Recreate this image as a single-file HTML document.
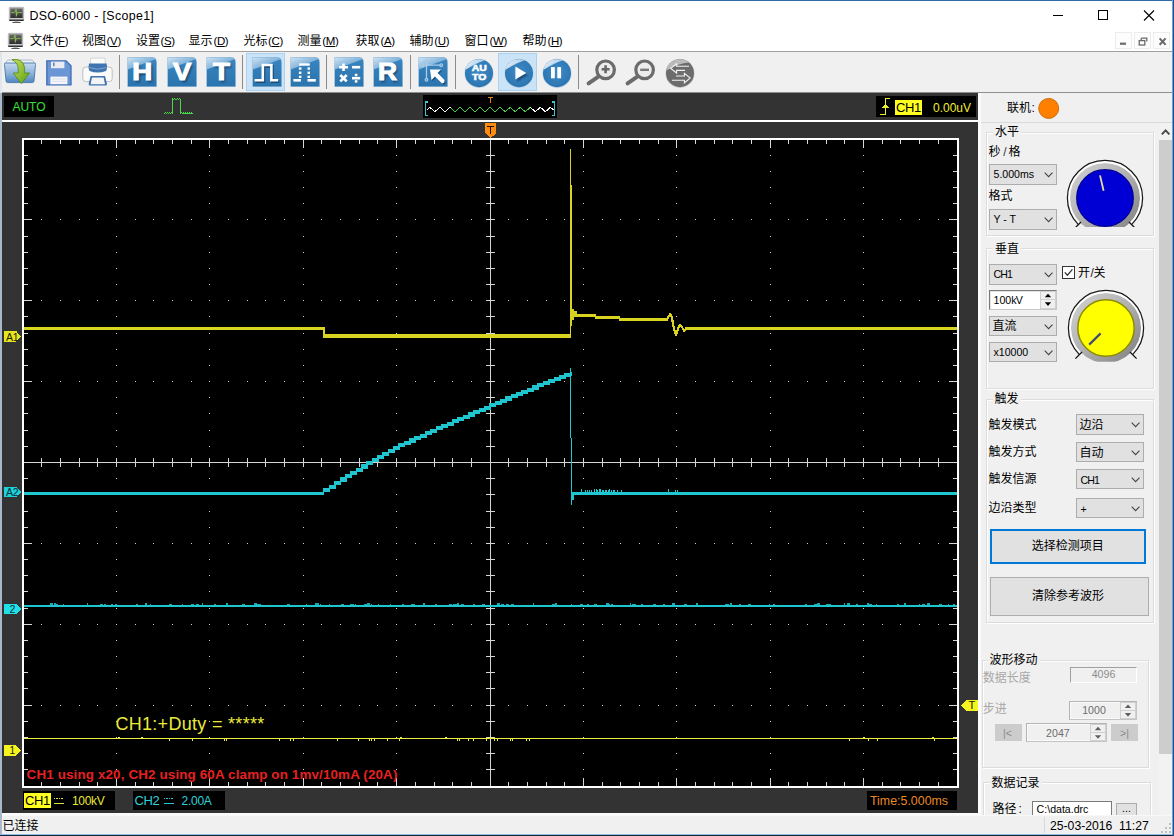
<!DOCTYPE html>
<html><head><meta charset="utf-8"><title>DSO-6000 - [Scope1]</title>
<style>
html,body{margin:0;padding:0}
body{width:1174px;height:836px;position:relative;overflow:hidden;background:#f0f0f0;font-family:"Liberation Sans",sans-serif;font-size:12px}
svg{overflow:visible}
.cj{position:absolute;font-size:12px;line-height:12px;color:#000;white-space:pre;font-family:"Liberation Sans","Noto Sans CJK SC",sans-serif}
</style></head><body>
<div style="position:absolute;left:0px;top:52px;width:1174px;height:40px;background:#f0f0f0"></div>
<div style="position:absolute;left:0px;top:92px;width:1174px;height:1px;background:#8e8e8e"></div>
<div style="position:absolute;left:119px;top:55px;width:1px;height:34px;background:#8a8a8a"></div>
<div style="position:absolute;left:242px;top:55px;width:1px;height:34px;background:#8a8a8a"></div>
<div style="position:absolute;left:326px;top:55px;width:1px;height:34px;background:#8a8a8a"></div>
<div style="position:absolute;left:410px;top:55px;width:1px;height:34px;background:#8a8a8a"></div>
<div style="position:absolute;left:455px;top:55px;width:1px;height:34px;background:#8a8a8a"></div>
<div style="position:absolute;left:578px;top:55px;width:1px;height:34px;background:#8a8a8a"></div>
<div style="position:absolute;left:246px;top:53px;width:39px;height:37.5px;box-sizing:border-box;background:#cbe3f6;border:1px solid #a9d1f2"></div>
<div style="position:absolute;left:498px;top:53px;width:39px;height:37.5px;box-sizing:border-box;background:#cbe3f6;border:1px solid #a9d1f2"></div>
<svg width="0" height="0" style="position:absolute"><defs>
<linearGradient id="bsq" x1="0" y1="0" x2="0" y2="1"><stop offset="0" stop-color="#3a86c0"/><stop offset="1" stop-color="#2b74ae"/></linearGradient>
<linearGradient id="bhl" x1="0" y1="0" x2="1" y2="1"><stop offset="0" stop-color="#dcebf7"/><stop offset="0.6" stop-color="#7fb2da"/><stop offset="1" stop-color="#4a8fc6"/></linearGradient>
<radialGradient id="bcir" cx="0.5" cy="0.45" r="0.6"><stop offset="0" stop-color="#3f8cc8"/><stop offset="0.8" stop-color="#2e78b4"/><stop offset="1" stop-color="#2a6aa2"/></radialGradient>
<linearGradient id="gcir" x1="0" y1="0" x2="1" y2="1"><stop offset="0" stop-color="#b5b5b5"/><stop offset="1" stop-color="#6f6f6f"/></linearGradient>
<linearGradient id="chl" x1="0" y1="0" x2="1" y2="0.6"><stop offset="0" stop-color="#f4f9fd"/><stop offset="1" stop-color="#9cc3e3"/></linearGradient>
<filter id="sh" x="-30%" y="-30%" width="160%" height="160%"><feGaussianBlur stdDeviation="1.1"/></filter>
<filter id="sh2" x="-30%" y="-30%" width="160%" height="160%"><feGaussianBlur stdDeviation="0.7"/></filter>
</defs></svg>
<svg style="position:absolute;left:126.5px;top:57px" width="30" height="30" viewBox="0 0 30 30" >
<path d="M0.2 0H25Q30 0 30 5V30H0.2Z" fill="#9fc4e2" opacity="0.6" filter="url(#sh2)"/>
<path d="M0.8 0.6H24.6Q29.4 0.6 29.4 5.4V29.4H0.8Z" fill="url(#bsq)"/>
<path d="M0.8 0.6H24.6Q27.4 0.6 28.6 2.2L0.8 12.6Z" fill="url(#bhl)" opacity="0.92"/>
<g transform="translate(15.3,23.2) scale(1.2,1)"><text x="0" y="0" text-anchor="middle" font-family="Liberation Sans" font-weight="bold" font-size="23" fill="#0c2f55" opacity="0.75" filter="url(#sh)" transform="translate(1.4,1.8)">H</text>
<text x="0" y="0" text-anchor="middle" font-family="Liberation Sans" font-weight="bold" font-size="23" fill="#fff" stroke="#fff" stroke-width="1">H</text></g></svg>
<svg style="position:absolute;left:166.5px;top:57px" width="30" height="30" viewBox="0 0 30 30" >
<path d="M0.2 0H25Q30 0 30 5V30H0.2Z" fill="#9fc4e2" opacity="0.6" filter="url(#sh2)"/>
<path d="M0.8 0.6H24.6Q29.4 0.6 29.4 5.4V29.4H0.8Z" fill="url(#bsq)"/>
<path d="M0.8 0.6H24.6Q27.4 0.6 28.6 2.2L0.8 12.6Z" fill="url(#bhl)" opacity="0.92"/>
<g transform="translate(15.3,23.2) scale(1.2,1)"><text x="0" y="0" text-anchor="middle" font-family="Liberation Sans" font-weight="bold" font-size="23" fill="#0c2f55" opacity="0.75" filter="url(#sh)" transform="translate(1.4,1.8)">V</text>
<text x="0" y="0" text-anchor="middle" font-family="Liberation Sans" font-weight="bold" font-size="23" fill="#fff" stroke="#fff" stroke-width="1">V</text></g></svg>
<svg style="position:absolute;left:205.5px;top:57px" width="30" height="30" viewBox="0 0 30 30" >
<path d="M0.2 0H25Q30 0 30 5V30H0.2Z" fill="#9fc4e2" opacity="0.6" filter="url(#sh2)"/>
<path d="M0.8 0.6H24.6Q29.4 0.6 29.4 5.4V29.4H0.8Z" fill="url(#bsq)"/>
<path d="M0.8 0.6H24.6Q27.4 0.6 28.6 2.2L0.8 12.6Z" fill="url(#bhl)" opacity="0.92"/>
<g transform="translate(15.3,23.2) scale(1.2,1)"><text x="0" y="0" text-anchor="middle" font-family="Liberation Sans" font-weight="bold" font-size="23" fill="#0c2f55" opacity="0.75" filter="url(#sh)" transform="translate(1.4,1.8)">T</text>
<text x="0" y="0" text-anchor="middle" font-family="Liberation Sans" font-weight="bold" font-size="23" fill="#fff" stroke="#fff" stroke-width="1">T</text></g></svg>
<svg style="position:absolute;left:251.5px;top:57px" width="30" height="30" viewBox="0 0 30 30" >
<path d="M0.2 0H25Q30 0 30 5V30H0.2Z" fill="#9fc4e2" opacity="0.6" filter="url(#sh2)"/>
<path d="M0.8 0.6H24.6Q29.4 0.6 29.4 5.4V29.4H0.8Z" fill="url(#bsq)"/>
<path d="M0.8 0.6H24.6Q27.4 0.6 28.6 2.2L0.8 12.6Z" fill="url(#bhl)" opacity="0.92"/>
<path d="M2.6 23.2H10.8V8H19.4V23.2H26.2" fill="none" stroke="#0c2f55" stroke-width="3" opacity="0.6" filter="url(#sh2)" transform="translate(1,1.4)"/>
<path d="M2.6 23.2H10.8V8H19.4V23.2H26.2" fill="none" stroke="#fff" stroke-width="2.6"/></svg>
<svg style="position:absolute;left:289.5px;top:57px" width="30" height="30" viewBox="0 0 30 30" >
<path d="M0.2 0H25Q30 0 30 5V30H0.2Z" fill="#9fc4e2" opacity="0.6" filter="url(#sh2)"/>
<path d="M0.8 0.6H24.6Q29.4 0.6 29.4 5.4V29.4H0.8Z" fill="url(#bsq)"/>
<path d="M0.8 0.6H24.6Q27.4 0.6 28.6 2.2L0.8 12.6Z" fill="url(#bhl)" opacity="0.92"/>
<g fill="#fff"><rect x="3.4" y="22" width="7.5" height="2.6"/><rect x="17.5" y="22" width="8.3" height="2.6"/><rect x="9.2" y="6.3" width="10.6" height="2.4"/>
<rect x="8.9" y="10.4" width="2.5" height="2.3"/><rect x="8.9" y="14.6" width="2.5" height="2.4"/><rect x="8.9" y="18.7" width="2.5" height="2.3"/>
<rect x="17.5" y="10.4" width="2.5" height="2.3"/><rect x="17.5" y="14.6" width="2.5" height="2.4"/><rect x="17.5" y="18.7" width="2.5" height="2.3"/></g></svg>
<svg style="position:absolute;left:334px;top:57px" width="30" height="30" viewBox="0 0 30 30" >
<path d="M0.2 0H25Q30 0 30 5V30H0.2Z" fill="#9fc4e2" opacity="0.6" filter="url(#sh2)"/>
<path d="M0.8 0.6H24.6Q29.4 0.6 29.4 5.4V29.4H0.8Z" fill="url(#bsq)"/>
<path d="M0.8 0.6H24.6Q27.4 0.6 28.6 2.2L0.8 12.6Z" fill="url(#bhl)" opacity="0.92"/>
<g stroke="#fff" stroke-width="2.6" fill="none"><path d="M5.1 10.2H14M9.5 6.4V14"/><path d="M18.1 10.2H26.2"/><path d="M6.3 18L12.7 24.4M12.7 18L6.3 24.4"/><path d="M18 21.2H26.2"/></g>
<g fill="#fff"><rect x="20.8" y="16.8" width="2.6" height="2.4"/><rect x="20.8" y="23.2" width="2.6" height="2.4"/></g></svg>
<svg style="position:absolute;left:373px;top:57px" width="30" height="30" viewBox="0 0 30 30" >
<path d="M0.2 0H25Q30 0 30 5V30H0.2Z" fill="#9fc4e2" opacity="0.6" filter="url(#sh2)"/>
<path d="M0.8 0.6H24.6Q29.4 0.6 29.4 5.4V29.4H0.8Z" fill="url(#bsq)"/>
<path d="M0.8 0.6H24.6Q27.4 0.6 28.6 2.2L0.8 12.6Z" fill="url(#bhl)" opacity="0.92"/>
<g transform="translate(14.600000000000001,23.2) scale(1.12,1)"><text x="0" y="0" text-anchor="middle" font-family="Liberation Sans" font-weight="bold" font-size="23.6" fill="#0c2f55" opacity="0.75" filter="url(#sh)" transform="translate(1.4,1.8)">R</text>
<text x="0" y="0" text-anchor="middle" font-family="Liberation Sans" font-weight="bold" font-size="23.6" fill="#fff" stroke="#fff" stroke-width="1">R</text></g></svg>
<svg style="position:absolute;left:418px;top:57px" width="30" height="30" viewBox="0 0 30 30" >
<path d="M0.2 0H25Q30 0 30 5V30H0.2Z" fill="#9fc4e2" opacity="0.6" filter="url(#sh2)"/>
<path d="M0.8 0.6H24.6Q29.4 0.6 29.4 5.4V29.4H0.8Z" fill="url(#bsq)"/>
<path d="M0.8 0.6H24.6Q27.4 0.6 28.6 2.2L0.8 12.6Z" fill="url(#bhl)" opacity="0.92"/>
<g stroke="#a9cbe6" stroke-width="1.3" fill="none"><path d="M8.5 5V21.6M5.6 8.2H22"/><circle cx="8.5" cy="3.8" r="1.3"/><circle cx="8.5" cy="22.8" r="1.3"/><circle cx="4.4" cy="8.2" r="1.3"/><circle cx="23.2" cy="8.2" r="1.3"/></g>
<path d="M12 12.5H23L19.6 16L26.5 23Q27 26 24 26.5L17 19.5L13.5 23Z" fill="#0c2f55" opacity="0.6" filter="url(#sh2)" transform="translate(1,1.2)"/>
<path d="M12 12.5H23L19.6 16L26.5 23Q27 26 24 26.5L17 19.5L13.5 23Z" fill="#fff"/></svg>
<svg style="position:absolute;left:463.7px;top:57.5px" width="30" height="30" viewBox="0 0 30 30" >
<circle cx="15" cy="15.4" r="14.6" fill="#a8c8e4" opacity="0.6" filter="url(#sh2)"/>
<circle cx="15" cy="15.2" r="14" fill="url(#bcir)"/>
<path d="M1.2 12A14 14 0 0 1 20.6 2.4Q12 5 1.2 12Z" fill="url(#chl)"/>
<g transform="translate(15.2,0) scale(1.13,1)" font-family="Liberation Sans" font-weight="bold" font-size="9.2" fill="#fff" stroke="#fff" stroke-width="0.55" text-anchor="middle"><text x="0" y="13.4">AU</text><text x="0" y="22.3">TO</text></g></svg>
<svg style="position:absolute;left:503.70000000000005px;top:57.5px" width="30" height="30" viewBox="0 0 30 30" >
<circle cx="15" cy="15.4" r="14.6" fill="#a8c8e4" opacity="0.6" filter="url(#sh2)"/>
<circle cx="15" cy="15.2" r="14" fill="url(#bcir)"/>
<path d="M1.2 12A14 14 0 0 1 20.6 2.4Q12 5 1.2 12Z" fill="url(#chl)"/>
<path d="M11.4 8.4L22.3 15L11.4 21.6Z" fill="#0c2f55" opacity="0.7" filter="url(#sh)" transform="translate(1.6,2)"/><path d="M11.4 8.4L22.3 15L11.4 21.6Z" fill="#fff"/></svg>
<svg style="position:absolute;left:541.9px;top:57.5px" width="30" height="30" viewBox="0 0 30 30" >
<circle cx="15" cy="15.4" r="14.6" fill="#a8c8e4" opacity="0.6" filter="url(#sh2)"/>
<circle cx="15" cy="15.2" r="14" fill="url(#bcir)"/>
<path d="M1.2 12A14 14 0 0 1 20.6 2.4Q12 5 1.2 12Z" fill="url(#chl)"/>
<rect x="9" y="9.1" width="3.8" height="11.2" fill="#fff"/><rect x="15.3" y="9.1" width="3.8" height="11.2" fill="#fff"/></svg>
<svg style="position:absolute;left:586px;top:59px" width="32" height="28" viewBox="0 0 32 28" ><circle cx="19.6" cy="10.8" r="8.8" fill="#ececec" stroke="#6b6b6b" stroke-width="3.2"/>
<path d="M12.4 17.6L2.6 24.4" stroke="#6b6b6b" stroke-width="4" stroke-linecap="round"/><path d="M15.6 10.3H23.6M19.6 6.3V14.3" stroke="#666" stroke-width="2.6"/></svg>
<svg style="position:absolute;left:625.2px;top:59px" width="32" height="28" viewBox="0 0 32 28" ><circle cx="19.6" cy="10.8" r="8.8" fill="#ececec" stroke="#6b6b6b" stroke-width="3.2"/>
<path d="M12.4 17.6L2.6 24.4" stroke="#6b6b6b" stroke-width="4" stroke-linecap="round"/><path d="M15.2 10.8H24" stroke="#7a7a7a" stroke-width="2.4"/></svg>
<svg style="position:absolute;left:664.7px;top:57.5px" width="30" height="30" viewBox="0 0 30 30" ><circle cx="15" cy="15.4" r="14.6" fill="#bdbdbd" opacity="0.5" filter="url(#sh2)"/>
<circle cx="15" cy="15.2" r="14" fill="#6c6c6c"/>
<path d="M1.3 12.5A14 14 0 0 1 24 4.4Q14 5 1.3 12.5Z" fill="#c9c9c9" opacity="0.85"/>
<g fill="none" stroke="#f2f2f2" stroke-width="1.1"><path d="M24 8.2H11.6V5.6L5.8 10.4L11.6 15V12.4H20"/><path d="M7 22.2H19.4V24.8L25.2 20L19.4 15.4V18H11"/></g></svg>
<svg style="position:absolute;left:3px;top:58px" width="34" height="28" viewBox="0 0 34 28" ><defs><linearGradient id="fg" x1="0" y1="0" x2="0" y2="1"><stop offset="0" stop-color="#c4d9ee"/><stop offset="0.5" stop-color="#8fb4dc"/><stop offset="1" stop-color="#4f86c0"/></linearGradient>
<linearGradient id="ag" x1="0" y1="0" x2="1" y2="1"><stop offset="0" stop-color="#c6e05a"/><stop offset="1" stop-color="#5f9e14"/></linearGradient></defs>
<path d="M3.5 3.5Q4 2 5.5 2H28.5Q30 2 30.5 3.5L31.5 6H2.5Z" fill="#e8eef5" stroke="#9aa8b8" stroke-width="0.7"/>
<path d="M1.5 6.5Q1 5 2.6 5H31.4Q33 5 32.5 6.5L31 23Q30.8 24.6 29.4 24.6H4.6Q3.2 24.6 3 23Z" fill="url(#fg)" stroke="#3d6da0" stroke-width="0.8"/>
<path d="M9 1.6Q20 0 21.6 9.6V15H26.6L18.4 25.6L10.2 15H15.2V10Q14.6 4.6 9 1.6Z" fill="url(#ag)" stroke="#4f8a10" stroke-width="0.8"/></svg>
<svg style="position:absolute;left:46px;top:60px" width="26" height="26" viewBox="0 0 26 26" ><path d="M0.8 0.8H20L25 5.8V24.8H0.8Z" fill="#6a96d6" stroke="#3f6eb4" stroke-width="1.3"/>
<rect x="5" y="1.6" width="13.4" height="6.6" fill="#e8ecf2"/><rect x="7" y="2.6" width="1.6" height="3.6" fill="#6a86b0"/>
<rect x="4.4" y="16.6" width="17" height="7.6" fill="#f4f6fa"/><path d="M6 19H20M6 21.4H20" stroke="#d5dbe6" stroke-width="0.8"/></svg>
<svg style="position:absolute;left:82px;top:57px" width="31" height="30" viewBox="0 0 31 30" ><rect x="8.6" y="1" width="14.6" height="9" rx="1" fill="#fafafa" stroke="#c9c9c9" stroke-width="0.8"/>
<rect x="0.8" y="10" width="29.4" height="14.6" rx="3" fill="#fbfbfb" stroke="#b8b8b8" stroke-width="0.9"/>
<path d="M7 6.6H24.6Q25.6 12 24 14Q15.5 17 7.6 14Q6 12 7 6.6Z" fill="#3f74b0"/>
<path d="M7.4 10.6Q15.5 13.6 24.2 10.6" stroke="#7fa5d0" stroke-width="1" fill="none"/>
<path d="M8.6 19H23L25 27Q25 28.6 23.6 28.6H8Q6.6 28.6 6.6 27Z" fill="#3f74b0"/>
<path d="M10 20.6H21.6L23 27.2H8.6Z" fill="#f4f4f4"/></svg>
<div style="position:absolute;left:2px;top:93px;width:976px;height:720px;background:#333"></div>
<svg style="position:absolute;left:0;top:0" width="1174" height="836" viewBox="0 0 1174 836" shape-rendering="crispEdges"><rect x="22" y="138" width="937" height="650" fill="#fff"/><rect x="24" y="140" width="933" height="646" fill="#000"/><g fill="#d0d0d0"><rect x="116" y="155" width="1" height="1"/><rect x="116" y="171" width="1" height="1"/><rect x="116" y="187" width="1" height="1"/><rect x="116" y="203" width="1" height="1"/><rect x="116" y="219" width="1" height="1"/><rect x="116" y="236" width="1" height="1"/><rect x="116" y="252" width="1" height="1"/><rect x="116" y="268" width="1" height="1"/><rect x="116" y="284" width="1" height="1"/><rect x="116" y="300" width="1" height="1"/><rect x="116" y="316" width="1" height="1"/><rect x="116" y="333" width="1" height="1"/><rect x="116" y="349" width="1" height="1"/><rect x="116" y="365" width="1" height="1"/><rect x="116" y="381" width="1" height="1"/><rect x="116" y="397" width="1" height="1"/><rect x="116" y="413" width="1" height="1"/><rect x="116" y="430" width="1" height="1"/><rect x="116" y="446" width="1" height="1"/><rect x="116" y="462" width="1" height="1"/><rect x="116" y="478" width="1" height="1"/><rect x="116" y="494" width="1" height="1"/><rect x="116" y="511" width="1" height="1"/><rect x="116" y="527" width="1" height="1"/><rect x="116" y="543" width="1" height="1"/><rect x="116" y="559" width="1" height="1"/><rect x="116" y="575" width="1" height="1"/><rect x="116" y="591" width="1" height="1"/><rect x="116" y="608" width="1" height="1"/><rect x="116" y="624" width="1" height="1"/><rect x="116" y="640" width="1" height="1"/><rect x="116" y="656" width="1" height="1"/><rect x="116" y="672" width="1" height="1"/><rect x="116" y="688" width="1" height="1"/><rect x="116" y="705" width="1" height="1"/><rect x="116" y="721" width="1" height="1"/><rect x="116" y="737" width="1" height="1"/><rect x="116" y="753" width="1" height="1"/><rect x="116" y="769" width="1" height="1"/><rect x="209" y="155" width="1" height="1"/><rect x="209" y="171" width="1" height="1"/><rect x="209" y="187" width="1" height="1"/><rect x="209" y="203" width="1" height="1"/><rect x="209" y="219" width="1" height="1"/><rect x="209" y="236" width="1" height="1"/><rect x="209" y="252" width="1" height="1"/><rect x="209" y="268" width="1" height="1"/><rect x="209" y="284" width="1" height="1"/><rect x="209" y="300" width="1" height="1"/><rect x="209" y="316" width="1" height="1"/><rect x="209" y="333" width="1" height="1"/><rect x="209" y="349" width="1" height="1"/><rect x="209" y="365" width="1" height="1"/><rect x="209" y="381" width="1" height="1"/><rect x="209" y="397" width="1" height="1"/><rect x="209" y="413" width="1" height="1"/><rect x="209" y="430" width="1" height="1"/><rect x="209" y="446" width="1" height="1"/><rect x="209" y="462" width="1" height="1"/><rect x="209" y="478" width="1" height="1"/><rect x="209" y="494" width="1" height="1"/><rect x="209" y="511" width="1" height="1"/><rect x="209" y="527" width="1" height="1"/><rect x="209" y="543" width="1" height="1"/><rect x="209" y="559" width="1" height="1"/><rect x="209" y="575" width="1" height="1"/><rect x="209" y="591" width="1" height="1"/><rect x="209" y="608" width="1" height="1"/><rect x="209" y="624" width="1" height="1"/><rect x="209" y="640" width="1" height="1"/><rect x="209" y="656" width="1" height="1"/><rect x="209" y="672" width="1" height="1"/><rect x="209" y="688" width="1" height="1"/><rect x="209" y="705" width="1" height="1"/><rect x="209" y="721" width="1" height="1"/><rect x="209" y="737" width="1" height="1"/><rect x="209" y="753" width="1" height="1"/><rect x="209" y="769" width="1" height="1"/><rect x="303" y="155" width="1" height="1"/><rect x="303" y="171" width="1" height="1"/><rect x="303" y="187" width="1" height="1"/><rect x="303" y="203" width="1" height="1"/><rect x="303" y="219" width="1" height="1"/><rect x="303" y="236" width="1" height="1"/><rect x="303" y="252" width="1" height="1"/><rect x="303" y="268" width="1" height="1"/><rect x="303" y="284" width="1" height="1"/><rect x="303" y="300" width="1" height="1"/><rect x="303" y="316" width="1" height="1"/><rect x="303" y="333" width="1" height="1"/><rect x="303" y="349" width="1" height="1"/><rect x="303" y="365" width="1" height="1"/><rect x="303" y="381" width="1" height="1"/><rect x="303" y="397" width="1" height="1"/><rect x="303" y="413" width="1" height="1"/><rect x="303" y="430" width="1" height="1"/><rect x="303" y="446" width="1" height="1"/><rect x="303" y="462" width="1" height="1"/><rect x="303" y="478" width="1" height="1"/><rect x="303" y="494" width="1" height="1"/><rect x="303" y="511" width="1" height="1"/><rect x="303" y="527" width="1" height="1"/><rect x="303" y="543" width="1" height="1"/><rect x="303" y="559" width="1" height="1"/><rect x="303" y="575" width="1" height="1"/><rect x="303" y="591" width="1" height="1"/><rect x="303" y="608" width="1" height="1"/><rect x="303" y="624" width="1" height="1"/><rect x="303" y="640" width="1" height="1"/><rect x="303" y="656" width="1" height="1"/><rect x="303" y="672" width="1" height="1"/><rect x="303" y="688" width="1" height="1"/><rect x="303" y="705" width="1" height="1"/><rect x="303" y="721" width="1" height="1"/><rect x="303" y="737" width="1" height="1"/><rect x="303" y="753" width="1" height="1"/><rect x="303" y="769" width="1" height="1"/><rect x="396" y="155" width="1" height="1"/><rect x="396" y="171" width="1" height="1"/><rect x="396" y="187" width="1" height="1"/><rect x="396" y="203" width="1" height="1"/><rect x="396" y="219" width="1" height="1"/><rect x="396" y="236" width="1" height="1"/><rect x="396" y="252" width="1" height="1"/><rect x="396" y="268" width="1" height="1"/><rect x="396" y="284" width="1" height="1"/><rect x="396" y="300" width="1" height="1"/><rect x="396" y="316" width="1" height="1"/><rect x="396" y="333" width="1" height="1"/><rect x="396" y="349" width="1" height="1"/><rect x="396" y="365" width="1" height="1"/><rect x="396" y="381" width="1" height="1"/><rect x="396" y="397" width="1" height="1"/><rect x="396" y="413" width="1" height="1"/><rect x="396" y="430" width="1" height="1"/><rect x="396" y="446" width="1" height="1"/><rect x="396" y="462" width="1" height="1"/><rect x="396" y="478" width="1" height="1"/><rect x="396" y="494" width="1" height="1"/><rect x="396" y="511" width="1" height="1"/><rect x="396" y="527" width="1" height="1"/><rect x="396" y="543" width="1" height="1"/><rect x="396" y="559" width="1" height="1"/><rect x="396" y="575" width="1" height="1"/><rect x="396" y="591" width="1" height="1"/><rect x="396" y="608" width="1" height="1"/><rect x="396" y="624" width="1" height="1"/><rect x="396" y="640" width="1" height="1"/><rect x="396" y="656" width="1" height="1"/><rect x="396" y="672" width="1" height="1"/><rect x="396" y="688" width="1" height="1"/><rect x="396" y="705" width="1" height="1"/><rect x="396" y="721" width="1" height="1"/><rect x="396" y="737" width="1" height="1"/><rect x="396" y="753" width="1" height="1"/><rect x="396" y="769" width="1" height="1"/><rect x="583" y="155" width="1" height="1"/><rect x="583" y="171" width="1" height="1"/><rect x="583" y="187" width="1" height="1"/><rect x="583" y="203" width="1" height="1"/><rect x="583" y="219" width="1" height="1"/><rect x="583" y="236" width="1" height="1"/><rect x="583" y="252" width="1" height="1"/><rect x="583" y="268" width="1" height="1"/><rect x="583" y="284" width="1" height="1"/><rect x="583" y="300" width="1" height="1"/><rect x="583" y="316" width="1" height="1"/><rect x="583" y="333" width="1" height="1"/><rect x="583" y="349" width="1" height="1"/><rect x="583" y="365" width="1" height="1"/><rect x="583" y="381" width="1" height="1"/><rect x="583" y="397" width="1" height="1"/><rect x="583" y="413" width="1" height="1"/><rect x="583" y="430" width="1" height="1"/><rect x="583" y="446" width="1" height="1"/><rect x="583" y="462" width="1" height="1"/><rect x="583" y="478" width="1" height="1"/><rect x="583" y="494" width="1" height="1"/><rect x="583" y="511" width="1" height="1"/><rect x="583" y="527" width="1" height="1"/><rect x="583" y="543" width="1" height="1"/><rect x="583" y="559" width="1" height="1"/><rect x="583" y="575" width="1" height="1"/><rect x="583" y="591" width="1" height="1"/><rect x="583" y="608" width="1" height="1"/><rect x="583" y="624" width="1" height="1"/><rect x="583" y="640" width="1" height="1"/><rect x="583" y="656" width="1" height="1"/><rect x="583" y="672" width="1" height="1"/><rect x="583" y="688" width="1" height="1"/><rect x="583" y="705" width="1" height="1"/><rect x="583" y="721" width="1" height="1"/><rect x="583" y="737" width="1" height="1"/><rect x="583" y="753" width="1" height="1"/><rect x="583" y="769" width="1" height="1"/><rect x="676" y="155" width="1" height="1"/><rect x="676" y="171" width="1" height="1"/><rect x="676" y="187" width="1" height="1"/><rect x="676" y="203" width="1" height="1"/><rect x="676" y="219" width="1" height="1"/><rect x="676" y="236" width="1" height="1"/><rect x="676" y="252" width="1" height="1"/><rect x="676" y="268" width="1" height="1"/><rect x="676" y="284" width="1" height="1"/><rect x="676" y="300" width="1" height="1"/><rect x="676" y="316" width="1" height="1"/><rect x="676" y="333" width="1" height="1"/><rect x="676" y="349" width="1" height="1"/><rect x="676" y="365" width="1" height="1"/><rect x="676" y="381" width="1" height="1"/><rect x="676" y="397" width="1" height="1"/><rect x="676" y="413" width="1" height="1"/><rect x="676" y="430" width="1" height="1"/><rect x="676" y="446" width="1" height="1"/><rect x="676" y="462" width="1" height="1"/><rect x="676" y="478" width="1" height="1"/><rect x="676" y="494" width="1" height="1"/><rect x="676" y="511" width="1" height="1"/><rect x="676" y="527" width="1" height="1"/><rect x="676" y="543" width="1" height="1"/><rect x="676" y="559" width="1" height="1"/><rect x="676" y="575" width="1" height="1"/><rect x="676" y="591" width="1" height="1"/><rect x="676" y="608" width="1" height="1"/><rect x="676" y="624" width="1" height="1"/><rect x="676" y="640" width="1" height="1"/><rect x="676" y="656" width="1" height="1"/><rect x="676" y="672" width="1" height="1"/><rect x="676" y="688" width="1" height="1"/><rect x="676" y="705" width="1" height="1"/><rect x="676" y="721" width="1" height="1"/><rect x="676" y="737" width="1" height="1"/><rect x="676" y="753" width="1" height="1"/><rect x="676" y="769" width="1" height="1"/><rect x="770" y="155" width="1" height="1"/><rect x="770" y="171" width="1" height="1"/><rect x="770" y="187" width="1" height="1"/><rect x="770" y="203" width="1" height="1"/><rect x="770" y="219" width="1" height="1"/><rect x="770" y="236" width="1" height="1"/><rect x="770" y="252" width="1" height="1"/><rect x="770" y="268" width="1" height="1"/><rect x="770" y="284" width="1" height="1"/><rect x="770" y="300" width="1" height="1"/><rect x="770" y="316" width="1" height="1"/><rect x="770" y="333" width="1" height="1"/><rect x="770" y="349" width="1" height="1"/><rect x="770" y="365" width="1" height="1"/><rect x="770" y="381" width="1" height="1"/><rect x="770" y="397" width="1" height="1"/><rect x="770" y="413" width="1" height="1"/><rect x="770" y="430" width="1" height="1"/><rect x="770" y="446" width="1" height="1"/><rect x="770" y="462" width="1" height="1"/><rect x="770" y="478" width="1" height="1"/><rect x="770" y="494" width="1" height="1"/><rect x="770" y="511" width="1" height="1"/><rect x="770" y="527" width="1" height="1"/><rect x="770" y="543" width="1" height="1"/><rect x="770" y="559" width="1" height="1"/><rect x="770" y="575" width="1" height="1"/><rect x="770" y="591" width="1" height="1"/><rect x="770" y="608" width="1" height="1"/><rect x="770" y="624" width="1" height="1"/><rect x="770" y="640" width="1" height="1"/><rect x="770" y="656" width="1" height="1"/><rect x="770" y="672" width="1" height="1"/><rect x="770" y="688" width="1" height="1"/><rect x="770" y="705" width="1" height="1"/><rect x="770" y="721" width="1" height="1"/><rect x="770" y="737" width="1" height="1"/><rect x="770" y="753" width="1" height="1"/><rect x="770" y="769" width="1" height="1"/><rect x="863" y="155" width="1" height="1"/><rect x="863" y="171" width="1" height="1"/><rect x="863" y="187" width="1" height="1"/><rect x="863" y="203" width="1" height="1"/><rect x="863" y="219" width="1" height="1"/><rect x="863" y="236" width="1" height="1"/><rect x="863" y="252" width="1" height="1"/><rect x="863" y="268" width="1" height="1"/><rect x="863" y="284" width="1" height="1"/><rect x="863" y="300" width="1" height="1"/><rect x="863" y="316" width="1" height="1"/><rect x="863" y="333" width="1" height="1"/><rect x="863" y="349" width="1" height="1"/><rect x="863" y="365" width="1" height="1"/><rect x="863" y="381" width="1" height="1"/><rect x="863" y="397" width="1" height="1"/><rect x="863" y="413" width="1" height="1"/><rect x="863" y="430" width="1" height="1"/><rect x="863" y="446" width="1" height="1"/><rect x="863" y="462" width="1" height="1"/><rect x="863" y="478" width="1" height="1"/><rect x="863" y="494" width="1" height="1"/><rect x="863" y="511" width="1" height="1"/><rect x="863" y="527" width="1" height="1"/><rect x="863" y="543" width="1" height="1"/><rect x="863" y="559" width="1" height="1"/><rect x="863" y="575" width="1" height="1"/><rect x="863" y="591" width="1" height="1"/><rect x="863" y="608" width="1" height="1"/><rect x="863" y="624" width="1" height="1"/><rect x="863" y="640" width="1" height="1"/><rect x="863" y="656" width="1" height="1"/><rect x="863" y="672" width="1" height="1"/><rect x="863" y="688" width="1" height="1"/><rect x="863" y="705" width="1" height="1"/><rect x="863" y="721" width="1" height="1"/><rect x="863" y="737" width="1" height="1"/><rect x="863" y="753" width="1" height="1"/><rect x="863" y="769" width="1" height="1"/><rect x="41" y="219" width="1" height="1"/><rect x="60" y="219" width="1" height="1"/><rect x="79" y="219" width="1" height="1"/><rect x="97" y="219" width="1" height="1"/><rect x="135" y="219" width="1" height="1"/><rect x="153" y="219" width="1" height="1"/><rect x="172" y="219" width="1" height="1"/><rect x="191" y="219" width="1" height="1"/><rect x="228" y="219" width="1" height="1"/><rect x="247" y="219" width="1" height="1"/><rect x="265" y="219" width="1" height="1"/><rect x="284" y="219" width="1" height="1"/><rect x="321" y="219" width="1" height="1"/><rect x="340" y="219" width="1" height="1"/><rect x="359" y="219" width="1" height="1"/><rect x="377" y="219" width="1" height="1"/><rect x="415" y="219" width="1" height="1"/><rect x="434" y="219" width="1" height="1"/><rect x="452" y="219" width="1" height="1"/><rect x="471" y="219" width="1" height="1"/><rect x="508" y="219" width="1" height="1"/><rect x="527" y="219" width="1" height="1"/><rect x="546" y="219" width="1" height="1"/><rect x="564" y="219" width="1" height="1"/><rect x="602" y="219" width="1" height="1"/><rect x="620" y="219" width="1" height="1"/><rect x="639" y="219" width="1" height="1"/><rect x="658" y="219" width="1" height="1"/><rect x="695" y="219" width="1" height="1"/><rect x="714" y="219" width="1" height="1"/><rect x="732" y="219" width="1" height="1"/><rect x="751" y="219" width="1" height="1"/><rect x="788" y="219" width="1" height="1"/><rect x="807" y="219" width="1" height="1"/><rect x="826" y="219" width="1" height="1"/><rect x="844" y="219" width="1" height="1"/><rect x="882" y="219" width="1" height="1"/><rect x="900" y="219" width="1" height="1"/><rect x="919" y="219" width="1" height="1"/><rect x="938" y="219" width="1" height="1"/><rect x="41" y="300" width="1" height="1"/><rect x="60" y="300" width="1" height="1"/><rect x="79" y="300" width="1" height="1"/><rect x="97" y="300" width="1" height="1"/><rect x="135" y="300" width="1" height="1"/><rect x="153" y="300" width="1" height="1"/><rect x="172" y="300" width="1" height="1"/><rect x="191" y="300" width="1" height="1"/><rect x="228" y="300" width="1" height="1"/><rect x="247" y="300" width="1" height="1"/><rect x="265" y="300" width="1" height="1"/><rect x="284" y="300" width="1" height="1"/><rect x="321" y="300" width="1" height="1"/><rect x="340" y="300" width="1" height="1"/><rect x="359" y="300" width="1" height="1"/><rect x="377" y="300" width="1" height="1"/><rect x="415" y="300" width="1" height="1"/><rect x="434" y="300" width="1" height="1"/><rect x="452" y="300" width="1" height="1"/><rect x="471" y="300" width="1" height="1"/><rect x="508" y="300" width="1" height="1"/><rect x="527" y="300" width="1" height="1"/><rect x="546" y="300" width="1" height="1"/><rect x="564" y="300" width="1" height="1"/><rect x="602" y="300" width="1" height="1"/><rect x="620" y="300" width="1" height="1"/><rect x="639" y="300" width="1" height="1"/><rect x="658" y="300" width="1" height="1"/><rect x="695" y="300" width="1" height="1"/><rect x="714" y="300" width="1" height="1"/><rect x="732" y="300" width="1" height="1"/><rect x="751" y="300" width="1" height="1"/><rect x="788" y="300" width="1" height="1"/><rect x="807" y="300" width="1" height="1"/><rect x="826" y="300" width="1" height="1"/><rect x="844" y="300" width="1" height="1"/><rect x="882" y="300" width="1" height="1"/><rect x="900" y="300" width="1" height="1"/><rect x="919" y="300" width="1" height="1"/><rect x="938" y="300" width="1" height="1"/><rect x="41" y="381" width="1" height="1"/><rect x="60" y="381" width="1" height="1"/><rect x="79" y="381" width="1" height="1"/><rect x="97" y="381" width="1" height="1"/><rect x="135" y="381" width="1" height="1"/><rect x="153" y="381" width="1" height="1"/><rect x="172" y="381" width="1" height="1"/><rect x="191" y="381" width="1" height="1"/><rect x="228" y="381" width="1" height="1"/><rect x="247" y="381" width="1" height="1"/><rect x="265" y="381" width="1" height="1"/><rect x="284" y="381" width="1" height="1"/><rect x="321" y="381" width="1" height="1"/><rect x="340" y="381" width="1" height="1"/><rect x="359" y="381" width="1" height="1"/><rect x="377" y="381" width="1" height="1"/><rect x="415" y="381" width="1" height="1"/><rect x="434" y="381" width="1" height="1"/><rect x="452" y="381" width="1" height="1"/><rect x="471" y="381" width="1" height="1"/><rect x="508" y="381" width="1" height="1"/><rect x="527" y="381" width="1" height="1"/><rect x="546" y="381" width="1" height="1"/><rect x="564" y="381" width="1" height="1"/><rect x="602" y="381" width="1" height="1"/><rect x="620" y="381" width="1" height="1"/><rect x="639" y="381" width="1" height="1"/><rect x="658" y="381" width="1" height="1"/><rect x="695" y="381" width="1" height="1"/><rect x="714" y="381" width="1" height="1"/><rect x="732" y="381" width="1" height="1"/><rect x="751" y="381" width="1" height="1"/><rect x="788" y="381" width="1" height="1"/><rect x="807" y="381" width="1" height="1"/><rect x="826" y="381" width="1" height="1"/><rect x="844" y="381" width="1" height="1"/><rect x="882" y="381" width="1" height="1"/><rect x="900" y="381" width="1" height="1"/><rect x="919" y="381" width="1" height="1"/><rect x="938" y="381" width="1" height="1"/><rect x="41" y="543" width="1" height="1"/><rect x="60" y="543" width="1" height="1"/><rect x="79" y="543" width="1" height="1"/><rect x="97" y="543" width="1" height="1"/><rect x="135" y="543" width="1" height="1"/><rect x="153" y="543" width="1" height="1"/><rect x="172" y="543" width="1" height="1"/><rect x="191" y="543" width="1" height="1"/><rect x="228" y="543" width="1" height="1"/><rect x="247" y="543" width="1" height="1"/><rect x="265" y="543" width="1" height="1"/><rect x="284" y="543" width="1" height="1"/><rect x="321" y="543" width="1" height="1"/><rect x="340" y="543" width="1" height="1"/><rect x="359" y="543" width="1" height="1"/><rect x="377" y="543" width="1" height="1"/><rect x="415" y="543" width="1" height="1"/><rect x="434" y="543" width="1" height="1"/><rect x="452" y="543" width="1" height="1"/><rect x="471" y="543" width="1" height="1"/><rect x="508" y="543" width="1" height="1"/><rect x="527" y="543" width="1" height="1"/><rect x="546" y="543" width="1" height="1"/><rect x="564" y="543" width="1" height="1"/><rect x="602" y="543" width="1" height="1"/><rect x="620" y="543" width="1" height="1"/><rect x="639" y="543" width="1" height="1"/><rect x="658" y="543" width="1" height="1"/><rect x="695" y="543" width="1" height="1"/><rect x="714" y="543" width="1" height="1"/><rect x="732" y="543" width="1" height="1"/><rect x="751" y="543" width="1" height="1"/><rect x="788" y="543" width="1" height="1"/><rect x="807" y="543" width="1" height="1"/><rect x="826" y="543" width="1" height="1"/><rect x="844" y="543" width="1" height="1"/><rect x="882" y="543" width="1" height="1"/><rect x="900" y="543" width="1" height="1"/><rect x="919" y="543" width="1" height="1"/><rect x="938" y="543" width="1" height="1"/><rect x="41" y="624" width="1" height="1"/><rect x="60" y="624" width="1" height="1"/><rect x="79" y="624" width="1" height="1"/><rect x="97" y="624" width="1" height="1"/><rect x="135" y="624" width="1" height="1"/><rect x="153" y="624" width="1" height="1"/><rect x="172" y="624" width="1" height="1"/><rect x="191" y="624" width="1" height="1"/><rect x="228" y="624" width="1" height="1"/><rect x="247" y="624" width="1" height="1"/><rect x="265" y="624" width="1" height="1"/><rect x="284" y="624" width="1" height="1"/><rect x="321" y="624" width="1" height="1"/><rect x="340" y="624" width="1" height="1"/><rect x="359" y="624" width="1" height="1"/><rect x="377" y="624" width="1" height="1"/><rect x="415" y="624" width="1" height="1"/><rect x="434" y="624" width="1" height="1"/><rect x="452" y="624" width="1" height="1"/><rect x="471" y="624" width="1" height="1"/><rect x="508" y="624" width="1" height="1"/><rect x="527" y="624" width="1" height="1"/><rect x="546" y="624" width="1" height="1"/><rect x="564" y="624" width="1" height="1"/><rect x="602" y="624" width="1" height="1"/><rect x="620" y="624" width="1" height="1"/><rect x="639" y="624" width="1" height="1"/><rect x="658" y="624" width="1" height="1"/><rect x="695" y="624" width="1" height="1"/><rect x="714" y="624" width="1" height="1"/><rect x="732" y="624" width="1" height="1"/><rect x="751" y="624" width="1" height="1"/><rect x="788" y="624" width="1" height="1"/><rect x="807" y="624" width="1" height="1"/><rect x="826" y="624" width="1" height="1"/><rect x="844" y="624" width="1" height="1"/><rect x="882" y="624" width="1" height="1"/><rect x="900" y="624" width="1" height="1"/><rect x="919" y="624" width="1" height="1"/><rect x="938" y="624" width="1" height="1"/><rect x="41" y="705" width="1" height="1"/><rect x="60" y="705" width="1" height="1"/><rect x="79" y="705" width="1" height="1"/><rect x="97" y="705" width="1" height="1"/><rect x="135" y="705" width="1" height="1"/><rect x="153" y="705" width="1" height="1"/><rect x="172" y="705" width="1" height="1"/><rect x="191" y="705" width="1" height="1"/><rect x="228" y="705" width="1" height="1"/><rect x="247" y="705" width="1" height="1"/><rect x="265" y="705" width="1" height="1"/><rect x="284" y="705" width="1" height="1"/><rect x="321" y="705" width="1" height="1"/><rect x="340" y="705" width="1" height="1"/><rect x="359" y="705" width="1" height="1"/><rect x="377" y="705" width="1" height="1"/><rect x="415" y="705" width="1" height="1"/><rect x="434" y="705" width="1" height="1"/><rect x="452" y="705" width="1" height="1"/><rect x="471" y="705" width="1" height="1"/><rect x="508" y="705" width="1" height="1"/><rect x="527" y="705" width="1" height="1"/><rect x="546" y="705" width="1" height="1"/><rect x="564" y="705" width="1" height="1"/><rect x="602" y="705" width="1" height="1"/><rect x="620" y="705" width="1" height="1"/><rect x="639" y="705" width="1" height="1"/><rect x="658" y="705" width="1" height="1"/><rect x="695" y="705" width="1" height="1"/><rect x="714" y="705" width="1" height="1"/><rect x="732" y="705" width="1" height="1"/><rect x="751" y="705" width="1" height="1"/><rect x="788" y="705" width="1" height="1"/><rect x="807" y="705" width="1" height="1"/><rect x="826" y="705" width="1" height="1"/><rect x="844" y="705" width="1" height="1"/><rect x="882" y="705" width="1" height="1"/><rect x="900" y="705" width="1" height="1"/><rect x="919" y="705" width="1" height="1"/><rect x="938" y="705" width="1" height="1"/></g><g fill="#d6d6d6"><rect x="41" y="140" width="1" height="4"/><rect x="41" y="782" width="1" height="4"/><rect x="60" y="140" width="1" height="4"/><rect x="60" y="782" width="1" height="4"/><rect x="79" y="140" width="1" height="4"/><rect x="79" y="782" width="1" height="4"/><rect x="97" y="140" width="1" height="4"/><rect x="97" y="782" width="1" height="4"/><rect x="116" y="140" width="1" height="8"/><rect x="116" y="778" width="1" height="8"/><rect x="135" y="140" width="1" height="4"/><rect x="135" y="782" width="1" height="4"/><rect x="153" y="140" width="1" height="4"/><rect x="153" y="782" width="1" height="4"/><rect x="172" y="140" width="1" height="4"/><rect x="172" y="782" width="1" height="4"/><rect x="191" y="140" width="1" height="4"/><rect x="191" y="782" width="1" height="4"/><rect x="209" y="140" width="1" height="8"/><rect x="209" y="778" width="1" height="8"/><rect x="228" y="140" width="1" height="4"/><rect x="228" y="782" width="1" height="4"/><rect x="247" y="140" width="1" height="4"/><rect x="247" y="782" width="1" height="4"/><rect x="265" y="140" width="1" height="4"/><rect x="265" y="782" width="1" height="4"/><rect x="284" y="140" width="1" height="4"/><rect x="284" y="782" width="1" height="4"/><rect x="303" y="140" width="1" height="8"/><rect x="303" y="778" width="1" height="8"/><rect x="321" y="140" width="1" height="4"/><rect x="321" y="782" width="1" height="4"/><rect x="340" y="140" width="1" height="4"/><rect x="340" y="782" width="1" height="4"/><rect x="359" y="140" width="1" height="4"/><rect x="359" y="782" width="1" height="4"/><rect x="377" y="140" width="1" height="4"/><rect x="377" y="782" width="1" height="4"/><rect x="396" y="140" width="1" height="8"/><rect x="396" y="778" width="1" height="8"/><rect x="415" y="140" width="1" height="4"/><rect x="415" y="782" width="1" height="4"/><rect x="434" y="140" width="1" height="4"/><rect x="434" y="782" width="1" height="4"/><rect x="452" y="140" width="1" height="4"/><rect x="452" y="782" width="1" height="4"/><rect x="471" y="140" width="1" height="4"/><rect x="471" y="782" width="1" height="4"/><rect x="490" y="140" width="1" height="8"/><rect x="490" y="778" width="1" height="8"/><rect x="508" y="140" width="1" height="4"/><rect x="508" y="782" width="1" height="4"/><rect x="527" y="140" width="1" height="4"/><rect x="527" y="782" width="1" height="4"/><rect x="546" y="140" width="1" height="4"/><rect x="546" y="782" width="1" height="4"/><rect x="564" y="140" width="1" height="4"/><rect x="564" y="782" width="1" height="4"/><rect x="583" y="140" width="1" height="8"/><rect x="583" y="778" width="1" height="8"/><rect x="602" y="140" width="1" height="4"/><rect x="602" y="782" width="1" height="4"/><rect x="620" y="140" width="1" height="4"/><rect x="620" y="782" width="1" height="4"/><rect x="639" y="140" width="1" height="4"/><rect x="639" y="782" width="1" height="4"/><rect x="658" y="140" width="1" height="4"/><rect x="658" y="782" width="1" height="4"/><rect x="676" y="140" width="1" height="8"/><rect x="676" y="778" width="1" height="8"/><rect x="695" y="140" width="1" height="4"/><rect x="695" y="782" width="1" height="4"/><rect x="714" y="140" width="1" height="4"/><rect x="714" y="782" width="1" height="4"/><rect x="732" y="140" width="1" height="4"/><rect x="732" y="782" width="1" height="4"/><rect x="751" y="140" width="1" height="4"/><rect x="751" y="782" width="1" height="4"/><rect x="770" y="140" width="1" height="8"/><rect x="770" y="778" width="1" height="8"/><rect x="788" y="140" width="1" height="4"/><rect x="788" y="782" width="1" height="4"/><rect x="807" y="140" width="1" height="4"/><rect x="807" y="782" width="1" height="4"/><rect x="826" y="140" width="1" height="4"/><rect x="826" y="782" width="1" height="4"/><rect x="844" y="140" width="1" height="4"/><rect x="844" y="782" width="1" height="4"/><rect x="863" y="140" width="1" height="8"/><rect x="863" y="778" width="1" height="8"/><rect x="882" y="140" width="1" height="4"/><rect x="882" y="782" width="1" height="4"/><rect x="900" y="140" width="1" height="4"/><rect x="900" y="782" width="1" height="4"/><rect x="919" y="140" width="1" height="4"/><rect x="919" y="782" width="1" height="4"/><rect x="938" y="140" width="1" height="4"/><rect x="938" y="782" width="1" height="4"/><rect x="24" y="155" width="4" height="1"/><rect x="953" y="155" width="4" height="1"/><rect x="24" y="171" width="4" height="1"/><rect x="953" y="171" width="4" height="1"/><rect x="24" y="187" width="4" height="1"/><rect x="953" y="187" width="4" height="1"/><rect x="24" y="203" width="4" height="1"/><rect x="953" y="203" width="4" height="1"/><rect x="24" y="219" width="8" height="1"/><rect x="949" y="219" width="8" height="1"/><rect x="24" y="236" width="4" height="1"/><rect x="953" y="236" width="4" height="1"/><rect x="24" y="252" width="4" height="1"/><rect x="953" y="252" width="4" height="1"/><rect x="24" y="268" width="4" height="1"/><rect x="953" y="268" width="4" height="1"/><rect x="24" y="284" width="4" height="1"/><rect x="953" y="284" width="4" height="1"/><rect x="24" y="300" width="8" height="1"/><rect x="949" y="300" width="8" height="1"/><rect x="24" y="316" width="4" height="1"/><rect x="953" y="316" width="4" height="1"/><rect x="24" y="333" width="4" height="1"/><rect x="953" y="333" width="4" height="1"/><rect x="24" y="349" width="4" height="1"/><rect x="953" y="349" width="4" height="1"/><rect x="24" y="365" width="4" height="1"/><rect x="953" y="365" width="4" height="1"/><rect x="24" y="381" width="8" height="1"/><rect x="949" y="381" width="8" height="1"/><rect x="24" y="397" width="4" height="1"/><rect x="953" y="397" width="4" height="1"/><rect x="24" y="413" width="4" height="1"/><rect x="953" y="413" width="4" height="1"/><rect x="24" y="430" width="4" height="1"/><rect x="953" y="430" width="4" height="1"/><rect x="24" y="446" width="4" height="1"/><rect x="953" y="446" width="4" height="1"/><rect x="24" y="462" width="8" height="1"/><rect x="949" y="462" width="8" height="1"/><rect x="24" y="478" width="4" height="1"/><rect x="953" y="478" width="4" height="1"/><rect x="24" y="494" width="4" height="1"/><rect x="953" y="494" width="4" height="1"/><rect x="24" y="511" width="4" height="1"/><rect x="953" y="511" width="4" height="1"/><rect x="24" y="527" width="4" height="1"/><rect x="953" y="527" width="4" height="1"/><rect x="24" y="543" width="8" height="1"/><rect x="949" y="543" width="8" height="1"/><rect x="24" y="559" width="4" height="1"/><rect x="953" y="559" width="4" height="1"/><rect x="24" y="575" width="4" height="1"/><rect x="953" y="575" width="4" height="1"/><rect x="24" y="591" width="4" height="1"/><rect x="953" y="591" width="4" height="1"/><rect x="24" y="608" width="4" height="1"/><rect x="953" y="608" width="4" height="1"/><rect x="24" y="624" width="8" height="1"/><rect x="949" y="624" width="8" height="1"/><rect x="24" y="640" width="4" height="1"/><rect x="953" y="640" width="4" height="1"/><rect x="24" y="656" width="4" height="1"/><rect x="953" y="656" width="4" height="1"/><rect x="24" y="672" width="4" height="1"/><rect x="953" y="672" width="4" height="1"/><rect x="24" y="688" width="4" height="1"/><rect x="953" y="688" width="4" height="1"/><rect x="24" y="705" width="8" height="1"/><rect x="949" y="705" width="8" height="1"/><rect x="24" y="721" width="4" height="1"/><rect x="953" y="721" width="4" height="1"/><rect x="24" y="737" width="4" height="1"/><rect x="953" y="737" width="4" height="1"/><rect x="24" y="753" width="4" height="1"/><rect x="953" y="753" width="4" height="1"/><rect x="24" y="769" width="4" height="1"/><rect x="953" y="769" width="4" height="1"/><rect x="24" y="462" width="933" height="1"/><rect x="490" y="140" width="1" height="646"/><rect x="41" y="458" width="1" height="9"/><rect x="60" y="458" width="1" height="9"/><rect x="79" y="458" width="1" height="9"/><rect x="97" y="458" width="1" height="9"/><rect x="116" y="458" width="1" height="9"/><rect x="135" y="458" width="1" height="9"/><rect x="153" y="458" width="1" height="9"/><rect x="172" y="458" width="1" height="9"/><rect x="191" y="458" width="1" height="9"/><rect x="209" y="458" width="1" height="9"/><rect x="228" y="458" width="1" height="9"/><rect x="247" y="458" width="1" height="9"/><rect x="265" y="458" width="1" height="9"/><rect x="284" y="458" width="1" height="9"/><rect x="303" y="458" width="1" height="9"/><rect x="321" y="458" width="1" height="9"/><rect x="340" y="458" width="1" height="9"/><rect x="359" y="458" width="1" height="9"/><rect x="377" y="458" width="1" height="9"/><rect x="396" y="458" width="1" height="9"/><rect x="415" y="458" width="1" height="9"/><rect x="434" y="458" width="1" height="9"/><rect x="452" y="458" width="1" height="9"/><rect x="471" y="458" width="1" height="9"/><rect x="490" y="458" width="1" height="9"/><rect x="508" y="458" width="1" height="9"/><rect x="527" y="458" width="1" height="9"/><rect x="546" y="458" width="1" height="9"/><rect x="564" y="458" width="1" height="9"/><rect x="583" y="458" width="1" height="9"/><rect x="602" y="458" width="1" height="9"/><rect x="620" y="458" width="1" height="9"/><rect x="639" y="458" width="1" height="9"/><rect x="658" y="458" width="1" height="9"/><rect x="676" y="458" width="1" height="9"/><rect x="695" y="458" width="1" height="9"/><rect x="714" y="458" width="1" height="9"/><rect x="732" y="458" width="1" height="9"/><rect x="751" y="458" width="1" height="9"/><rect x="770" y="458" width="1" height="9"/><rect x="788" y="458" width="1" height="9"/><rect x="807" y="458" width="1" height="9"/><rect x="826" y="458" width="1" height="9"/><rect x="844" y="458" width="1" height="9"/><rect x="863" y="458" width="1" height="9"/><rect x="882" y="458" width="1" height="9"/><rect x="900" y="458" width="1" height="9"/><rect x="919" y="458" width="1" height="9"/><rect x="938" y="458" width="1" height="9"/><rect x="486" y="155" width="9" height="1"/><rect x="486" y="171" width="9" height="1"/><rect x="486" y="187" width="9" height="1"/><rect x="486" y="203" width="9" height="1"/><rect x="486" y="219" width="9" height="1"/><rect x="486" y="236" width="9" height="1"/><rect x="486" y="252" width="9" height="1"/><rect x="486" y="268" width="9" height="1"/><rect x="486" y="284" width="9" height="1"/><rect x="486" y="300" width="9" height="1"/><rect x="486" y="316" width="9" height="1"/><rect x="486" y="333" width="9" height="1"/><rect x="486" y="349" width="9" height="1"/><rect x="486" y="365" width="9" height="1"/><rect x="486" y="381" width="9" height="1"/><rect x="486" y="397" width="9" height="1"/><rect x="486" y="413" width="9" height="1"/><rect x="486" y="430" width="9" height="1"/><rect x="486" y="446" width="9" height="1"/><rect x="486" y="462" width="9" height="1"/><rect x="486" y="478" width="9" height="1"/><rect x="486" y="494" width="9" height="1"/><rect x="486" y="511" width="9" height="1"/><rect x="486" y="527" width="9" height="1"/><rect x="486" y="543" width="9" height="1"/><rect x="486" y="559" width="9" height="1"/><rect x="486" y="575" width="9" height="1"/><rect x="486" y="591" width="9" height="1"/><rect x="486" y="608" width="9" height="1"/><rect x="486" y="624" width="9" height="1"/><rect x="486" y="640" width="9" height="1"/><rect x="486" y="656" width="9" height="1"/><rect x="486" y="672" width="9" height="1"/><rect x="486" y="688" width="9" height="1"/><rect x="486" y="705" width="9" height="1"/><rect x="486" y="721" width="9" height="1"/><rect x="486" y="737" width="9" height="1"/><rect x="486" y="753" width="9" height="1"/><rect x="486" y="769" width="9" height="1"/></g><g fill="#1fc6cf"><rect x="24" y="491.7" width="300" height="3.2"/><rect x="323.4" y="488.1" width="7.0" height="4.2"/><rect x="328.8" y="484.5" width="7.0" height="4.2"/><rect x="334.1" y="481.0" width="7.0" height="4.2"/><rect x="339.5" y="477.4" width="7.0" height="4.2"/><rect x="344.8" y="474.0" width="7.0" height="4.2"/><rect x="350.2" y="470.8" width="7.0" height="4.2"/><rect x="355.5" y="467.6" width="7.0" height="4.2"/><rect x="360.9" y="464.4" width="7.0" height="4.2"/><rect x="366.2" y="461.1" width="7.0" height="4.2"/><rect x="371.6" y="458.0" width="7.0" height="4.2"/><rect x="376.9" y="454.9" width="7.0" height="4.2"/><rect x="382.3" y="451.7" width="7.0" height="4.2"/><rect x="387.6" y="448.6" width="7.0" height="4.2"/><rect x="393.0" y="445.5" width="7.0" height="4.2"/><rect x="398.3" y="443.1" width="7.0" height="4.2"/><rect x="403.7" y="440.7" width="7.0" height="4.2"/><rect x="409.0" y="438.4" width="7.0" height="4.2"/><rect x="414.4" y="436.0" width="7.0" height="4.2"/><rect x="419.7" y="433.5" width="7.0" height="4.2"/><rect x="425.1" y="431.0" width="7.0" height="4.2"/><rect x="430.4" y="428.6" width="7.0" height="4.2"/><rect x="435.8" y="426.1" width="7.0" height="4.2"/><rect x="441.1" y="423.8" width="7.0" height="4.2"/><rect x="446.5" y="421.5" width="7.0" height="4.2"/><rect x="451.8" y="419.2" width="7.0" height="4.2"/><rect x="457.2" y="416.9" width="7.0" height="4.2"/><rect x="462.5" y="414.6" width="7.0" height="4.2"/><rect x="467.9" y="412.3" width="7.0" height="4.2"/><rect x="473.2" y="410.0" width="7.0" height="4.2"/><rect x="478.6" y="407.7" width="7.0" height="4.2"/><rect x="483.9" y="405.5" width="7.0" height="4.2"/><rect x="489.3" y="403.2" width="7.0" height="4.2"/><rect x="494.6" y="400.9" width="7.0" height="4.2"/><rect x="500.0" y="398.7" width="7.0" height="4.2"/><rect x="505.3" y="396.4" width="7.0" height="4.2"/><rect x="510.7" y="394.2" width="7.0" height="4.2"/><rect x="516.0" y="392.0" width="7.0" height="4.2"/><rect x="521.4" y="389.7" width="7.0" height="4.2"/><rect x="526.7" y="387.5" width="7.0" height="4.2"/><rect x="532.1" y="385.3" width="7.0" height="4.2"/><rect x="537.4" y="383.2" width="7.0" height="4.2"/><rect x="542.8" y="381.0" width="7.0" height="4.2"/><rect x="548.1" y="378.9" width="7.0" height="4.2"/><rect x="553.5" y="376.7" width="7.0" height="4.2"/><rect x="558.8" y="374.6" width="7.0" height="4.2"/><rect x="564.2" y="372.5" width="7.0" height="4.2"/><rect x="569.5" y="371.5" width="2.7" height="4.2"/><rect x="570" y="368" width="1.2" height="70"/><rect x="570.8" y="438" width="1.2" height="67"/><rect x="571.4" y="492" width="3" height="8"/><rect x="573" y="491.7" width="384" height="3.2"/><rect x="581" y="489.4" width="1.4" height="2.6"/><rect x="585" y="489.6" width="1.4" height="2.6"/><rect x="587" y="489.5" width="1.4" height="2.6"/><rect x="589" y="489.7" width="1.4" height="2.6"/><rect x="591" y="489.7" width="1.4" height="2.6"/><rect x="594" y="489.3" width="1.4" height="2.6"/><rect x="596" y="489.2" width="1.4" height="2.6"/><rect x="597" y="489.9" width="1.4" height="2.6"/><rect x="599" y="489.4" width="1.4" height="2.6"/><rect x="600" y="489.4" width="1.4" height="2.6"/><rect x="602" y="490.0" width="1.4" height="2.6"/><rect x="603" y="489.6" width="1.4" height="2.6"/><rect x="605" y="489.9" width="1.4" height="2.6"/><rect x="606" y="489.6" width="1.4" height="2.6"/><rect x="608" y="489.7" width="1.4" height="2.6"/><rect x="609" y="489.3" width="1.4" height="2.6"/><rect x="611" y="489.7" width="1.4" height="2.6"/><rect x="613" y="489.9" width="1.4" height="2.6"/><rect x="614" y="489.6" width="1.4" height="2.6"/><rect x="617" y="489.8" width="1.4" height="2.6"/><rect x="621" y="489.7" width="1.4" height="2.6"/><rect x="668" y="489.3" width="1.4" height="2.6"/><rect x="675" y="489.8" width="1.4" height="2.6"/><rect x="677" y="489.7" width="1.4" height="2.6"/><rect x="24" y="605.2" width="933" height="1.3"/><rect x="50" y="603.4" width="2.6" height="2.4" opacity="0.85"/><rect x="54" y="603.3" width="2.3" height="2.4" opacity="0.85"/><rect x="56" y="603.6" width="1.6" height="2.4" opacity="0.85"/><rect x="63" y="604.0" width="1.3" height="2.4" opacity="0.85"/><rect x="87" y="603.3" width="1.3" height="2.4" opacity="0.85"/><rect x="100" y="603.8" width="2.6" height="2.4" opacity="0.85"/><rect x="104" y="603.9" width="2.4" height="2.4" opacity="0.85"/><rect x="111" y="603.9" width="2.1" height="2.4" opacity="0.85"/><rect x="115" y="604.1" width="1.9" height="2.4" opacity="0.85"/><rect x="136" y="603.5" width="2.1" height="2.4" opacity="0.85"/><rect x="145" y="603.4" width="1.9" height="2.4" opacity="0.85"/><rect x="150" y="604.2" width="1.2" height="2.4" opacity="0.85"/><rect x="169" y="603.9" width="2.5" height="2.4" opacity="0.85"/><rect x="182" y="603.9" width="1.2" height="2.4" opacity="0.85"/><rect x="191" y="603.8" width="2.7" height="2.4" opacity="0.85"/><rect x="196" y="603.6" width="2.7" height="2.4" opacity="0.85"/><rect x="202" y="603.3" width="1.1" height="2.4" opacity="0.85"/><rect x="214" y="603.9" width="2.0" height="2.4" opacity="0.85"/><rect x="226" y="603.4" width="2.0" height="2.4" opacity="0.85"/><rect x="242" y="603.8" width="2.8" height="2.4" opacity="0.85"/><rect x="254" y="603.4" width="2.6" height="2.4" opacity="0.85"/><rect x="256" y="603.8" width="1.7" height="2.4" opacity="0.85"/><rect x="258" y="603.7" width="2.5" height="2.4" opacity="0.85"/><rect x="287" y="604.1" width="2.9" height="2.4" opacity="0.85"/><rect x="306" y="603.6" width="1.3" height="2.4" opacity="0.85"/><rect x="315" y="603.4" width="3.5" height="2.4" opacity="0.85"/><rect x="320" y="603.5" width="1.1" height="2.4" opacity="0.85"/><rect x="329" y="603.6" width="1.1" height="2.4" opacity="0.85"/><rect x="341" y="603.6" width="2.6" height="2.4" opacity="0.85"/><rect x="350" y="604.0" width="3.5" height="2.4" opacity="0.85"/><rect x="355" y="603.5" width="1.4" height="2.4" opacity="0.85"/><rect x="364" y="603.5" width="3.1" height="2.4" opacity="0.85"/><rect x="367" y="603.4" width="3.4" height="2.4" opacity="0.85"/><rect x="371" y="603.7" width="1.1" height="2.4" opacity="0.85"/><rect x="378" y="603.8" width="1.2" height="2.4" opacity="0.85"/><rect x="390" y="603.6" width="1.4" height="2.4" opacity="0.85"/><rect x="402" y="603.7" width="2.3" height="2.4" opacity="0.85"/><rect x="411" y="604.0" width="3.5" height="2.4" opacity="0.85"/><rect x="423" y="603.4" width="2.0" height="2.4" opacity="0.85"/><rect x="435" y="603.7" width="1.9" height="2.4" opacity="0.85"/><rect x="449" y="603.5" width="2.7" height="2.4" opacity="0.85"/><rect x="453" y="604.1" width="3.5" height="2.4" opacity="0.85"/><rect x="457" y="603.3" width="2.2" height="2.4" opacity="0.85"/><rect x="461" y="603.8" width="3.3" height="2.4" opacity="0.85"/><rect x="473" y="604.1" width="1.9" height="2.4" opacity="0.85"/><rect x="482" y="603.9" width="3.3" height="2.4" opacity="0.85"/><rect x="497" y="603.4" width="3.0" height="2.4" opacity="0.85"/><rect x="501" y="604.1" width="2.8" height="2.4" opacity="0.85"/><rect x="506" y="604.1" width="2.8" height="2.4" opacity="0.85"/><rect x="511" y="604.1" width="3.0" height="2.4" opacity="0.85"/><rect x="533" y="603.3" width="1.0" height="2.4" opacity="0.85"/><rect x="552" y="604.1" width="3.1" height="2.4" opacity="0.85"/><rect x="555" y="603.4" width="2.3" height="2.4" opacity="0.85"/><rect x="571" y="604.0" width="1.2" height="2.4" opacity="0.85"/><rect x="580" y="603.7" width="2.5" height="2.4" opacity="0.85"/><rect x="587" y="604.1" width="2.3" height="2.4" opacity="0.85"/><rect x="594" y="603.7" width="3.2" height="2.4" opacity="0.85"/><rect x="606" y="603.2" width="3.0" height="2.4" opacity="0.85"/><rect x="609" y="603.8" width="1.3" height="2.4" opacity="0.85"/><rect x="611" y="603.7" width="2.4" height="2.4" opacity="0.85"/><rect x="630" y="603.4" width="1.1" height="2.4" opacity="0.85"/><rect x="632" y="603.8" width="2.9" height="2.4" opacity="0.85"/><rect x="634" y="603.8" width="2.3" height="2.4" opacity="0.85"/><rect x="641" y="603.5" width="2.3" height="2.4" opacity="0.85"/><rect x="653" y="604.1" width="2.7" height="2.4" opacity="0.85"/><rect x="663" y="603.6" width="1.8" height="2.4" opacity="0.85"/><rect x="672" y="603.3" width="2.7" height="2.4" opacity="0.85"/><rect x="684" y="604.0" width="3.3" height="2.4" opacity="0.85"/><rect x="696" y="603.3" width="2.2" height="2.4" opacity="0.85"/><rect x="725" y="603.9" width="3.5" height="2.4" opacity="0.85"/><rect x="730" y="603.4" width="1.8" height="2.4" opacity="0.85"/><rect x="739" y="603.5" width="2.1" height="2.4" opacity="0.85"/><rect x="748" y="603.5" width="2.6" height="2.4" opacity="0.85"/><rect x="769" y="604.1" width="1.2" height="2.4" opacity="0.85"/><rect x="773" y="604.0" width="1.7" height="2.4" opacity="0.85"/><rect x="805" y="604.1" width="2.4" height="2.4" opacity="0.85"/><rect x="814" y="603.5" width="3.0" height="2.4" opacity="0.85"/><rect x="817" y="603.3" width="3.3" height="2.4" opacity="0.85"/><rect x="826" y="603.5" width="2.5" height="2.4" opacity="0.85"/><rect x="829" y="604.1" width="2.1" height="2.4" opacity="0.85"/><rect x="844" y="603.4" width="1.3" height="2.4" opacity="0.85"/><rect x="847" y="603.4" width="3.3" height="2.4" opacity="0.85"/><rect x="856" y="604.0" width="1.7" height="2.4" opacity="0.85"/><rect x="867" y="603.2" width="1.6" height="2.4" opacity="0.85"/><rect x="869" y="603.7" width="3.4" height="2.4" opacity="0.85"/><rect x="876" y="604.1" width="1.3" height="2.4" opacity="0.85"/><rect x="897" y="604.0" width="2.0" height="2.4" opacity="0.85"/><rect x="904" y="603.4" width="1.6" height="2.4" opacity="0.85"/><rect x="919" y="603.5" width="1.1" height="2.4" opacity="0.85"/><rect x="922" y="603.8" width="3.2" height="2.4" opacity="0.85"/><rect x="927" y="603.3" width="3.1" height="2.4" opacity="0.85"/><rect x="939" y="604.2" width="2.5" height="2.4" opacity="0.85"/><rect x="948" y="603.7" width="1.4" height="2.4" opacity="0.85"/><rect x="953" y="603.6" width="1.8" height="2.4" opacity="0.85"/></g><g fill="#d8d420"><rect x="24" y="326.7" width="300.5" height="3.3"/><rect x="322.6" y="326.7" width="2" height="11"/><rect x="323" y="333.9" width="248" height="3.8"/><rect x="570" y="149" width="1.1" height="40"/><rect x="570" y="185" width="2.1" height="141"/><rect x="570" y="324" width="1.2" height="12"/><rect x="572" y="309" width="1.6" height="11"/><rect x="573" y="311" width="4.2" height="6"/><rect x="571" y="314" width="25" height="3.2"/><rect x="595" y="316" width="25" height="3.4"/><rect x="619" y="318.2" width="49" height="3.2"/><path d="M667 319.8L669 316L670.4 314L672 318L674 329L676 334.6L678 329L680 324.6L682 327L684 331L686 328.4" fill="none" stroke="#d8d420" stroke-width="2.2" stroke-linejoin="round"/><rect x="685" y="326.7" width="272" height="3.3"/></g><g fill="#eeee3a"><rect x="24" y="737.6" width="933" height="1.2"/><rect x="169" y="738" width="1.4" height="2.6"/><rect x="192" y="738" width="1.4" height="2.6"/><rect x="224" y="738" width="1.4" height="2.6"/><rect x="226" y="738" width="1.4" height="2.6"/><rect x="279" y="738" width="1.4" height="2.6"/><rect x="290" y="738" width="1.4" height="2.6"/><rect x="293" y="738" width="1.4" height="2.6"/><rect x="337" y="738" width="1.4" height="2.6"/><rect x="358" y="738" width="1.4" height="2.6"/><rect x="369" y="738" width="1.4" height="2.6"/><rect x="371" y="738" width="1.4" height="2.6"/><rect x="374" y="738" width="1.4" height="2.6"/><rect x="387" y="738" width="1.4" height="2.6"/><rect x="399" y="738" width="1.4" height="2.6"/><rect x="457" y="738" width="1.4" height="2.6"/><rect x="468" y="738" width="1.4" height="2.6"/><rect x="473" y="738" width="1.4" height="2.6"/><rect x="494" y="738" width="1.4" height="2.6"/><rect x="497" y="738" width="1.4" height="2.6"/><rect x="510" y="738" width="1.4" height="2.6"/><rect x="512" y="738" width="1.4" height="2.6"/><rect x="526" y="738" width="1.4" height="2.6"/><rect x="529" y="738" width="1.4" height="2.6"/><rect x="849" y="738" width="1.4" height="2.6"/><rect x="868" y="738" width="1.4" height="2.6"/><rect x="877" y="738" width="1.4" height="2.6"/><rect x="934" y="738" width="1.4" height="2.6"/><rect x="459" y="738" width="1.4" height="2.6"/><rect x="486" y="738" width="1.4" height="2.6"/><rect x="497" y="738" width="1.4" height="2.6"/><rect x="510" y="738" width="1.4" height="2.6"/><rect x="118" y="736.6" width="1.6" height="1.4"/><rect x="141" y="736.6" width="1.6" height="1.4"/><rect x="400" y="736.6" width="1.6" height="1.4"/><rect x="445" y="736.6" width="1.6" height="1.4"/><rect x="489" y="736.6" width="1.6" height="1.4"/><rect x="863" y="736.6" width="1.6" height="1.4"/><rect x="932" y="736.6" width="1.6" height="1.4"/></g><rect x="2" y="120" width="976" height="2" fill="#fff"/><rect x="4" y="96" width="50" height="21" fill="#000"/><path d="M164.5 113.6l1-1 1 1 1-1 1 1 1-1 1 1 1-1 0.9 0.6V98.6l1.2 1 1.2-1 1.2 1 1.2-1 1.2 1 1.2-1 1.2 0.8V113.4l1 -0.8 1 1 1-1 1 1 1-1 1 1 1-1 1 1 1-1 1 1 1-1 1 1" fill="none" stroke="#48d848" stroke-width="1"/><rect x="423" y="95" width="134" height="23" fill="#000"/><path d="M428 102H425.6V115.6H428M552 102H554.4V115.6H552" fill="none" stroke="#38c8d0" stroke-width="1.2"/><path d="M426.5 110.2 L429.8 107.2 L434.8 111.8 L439.9 107.2 L444.9 111.8 L449.9 107.2 L451.0 108.2" fill="none" stroke="#fff" stroke-width="1"/><path d="M451.0 108.2 L454.9 111.8 L459.9 107.2 L465.0 111.8 L470.0 107.2 L475.0 111.8 L480.1 107.2 L485.1 111.8 L490.1 107.2 L495.1 111.8 L500.2 107.2 L505.2 111.8 L510.2 107.2 L515.2 111.8 L520.2 107.2 L525.3 111.8 L530.0 107.5" fill="none" stroke="#4ad04a" stroke-width="1"/><path d="M530.0 107.5 L530.3 107.2 L535.3 111.8 L540.4 107.2 L545.4 111.8 L550.4 107.2 L553.5 110.0" fill="none" stroke="#fff" stroke-width="1"/><path d="M488.4 97.8H493M490.7 97.8V103" stroke="#e88020" stroke-width="1" fill="none"/><path d="M485 123.4H496.4V133L490.7 138L485 133Z" fill="#ff8a10"/><path d="M487.4 126.4H494M490.7 126.4V133.6" stroke="#201000" stroke-width="1.2" fill="none"/><rect x="876" y="96" width="100" height="21" fill="#000"/><path d="M880 114.6H885.6V98.6H890" fill="none" stroke="#eeee30" stroke-width="1.2"/><path d="M882.4 107.6L885.6 103.6L888.8 107.6Z" fill="#eeee30"/><rect x="895" y="100" width="27" height="15" fill="#ffff20"/><rect x="23" y="791" width="92" height="18.5" fill="#000"/><rect x="133" y="791" width="92" height="18.5" fill="#000"/><rect x="867" y="791" width="90" height="18.5" fill="#000"/><rect x="24" y="793.4" width="27" height="14.8" fill="#ffff20"/><path d="M53.5 798.5h1.6m1 0h1.6m1 0h1.6m1 0h1.6" stroke="#e0e040" stroke-width="1"/><path d="M53.5 803h10" stroke="#e0e040" stroke-width="1"/><path d="M163.5 798.5h1.6m1 0h1.6m1 0h1.6m1 0h1.6" stroke="#30c8d0" stroke-width="1"/><path d="M163.5 803h10" stroke="#30c8d0" stroke-width="1"/><path d="M4 330.90000000000003H16L21 336.3L16 341.7H4Z" fill="#e6e620"/><path d="M4 486.6H16L21 492L16 497.4H4Z" fill="#20d0d8"/><path d="M4 603.6H16L21 609L16 614.4H4Z" fill="#20e0e8"/><path d="M4 745.2H16L21 750.6L16 756.0H4Z" fill="#f4f420"/><path d="M961.4 705.4L966.4 700H977.6V710.8H966.4Z" fill="#f4f420"/></svg>
<span style="position:absolute;left:12.4px;top:100.84px;font-size:12px;line-height:12px;color:#38e038;white-space:pre;">AUTO</span>
<span style="position:absolute;left:896px;top:101.20px;font-size:13px;line-height:13px;color:#000;white-space:pre;letter-spacing:-0.4px">CH1</span>
<span style="position:absolute;left:933px;top:101.84px;font-size:12px;line-height:12px;color:#eeee30;white-space:pre;letter-spacing:0px">0.00uV</span>
<span style="position:absolute;left:25px;top:794.40px;font-size:13px;line-height:13px;color:#000;white-space:pre;letter-spacing:-0.4px">CH1</span>
<span style="position:absolute;left:72px;top:795.04px;font-size:12px;line-height:12px;color:#e8e838;white-space:pre;letter-spacing:-0.3px">100kV</span>
<span style="position:absolute;left:134.6px;top:794.40px;font-size:13px;line-height:13px;color:#30d0d8;white-space:pre;letter-spacing:-0.4px">CH2</span>
<span style="position:absolute;left:181.6px;top:795.04px;font-size:12px;line-height:12px;color:#30d0d8;white-space:pre;letter-spacing:-0.3px">2.00A</span>
<span style="position:absolute;left:870px;top:794.70px;font-size:12.4px;line-height:12.4px;color:#e88a28;white-space:pre;">Time:5.000ms</span>
<span style="position:absolute;left:115.4px;top:715.16px;font-size:18px;line-height:18px;color:#eaea3c;white-space:pre;letter-spacing:0.3px">CH1:+Duty = *****</span>
<span style="position:absolute;left:26.6px;top:768.06px;font-size:13.4px;line-height:13.4px;color:#e82020;white-space:pre;font-weight:bold;letter-spacing:0.14px">CH1 using x20, CH2 using 60A clamp on 1mv/10mA (20A)</span>
<span style="position:absolute;left:6px;top:331.71px;font-size:10.5px;line-height:10.5px;color:#202000;white-space:pre;letter-spacing:-0.3px">A1</span>
<span style="position:absolute;left:6px;top:487.31px;font-size:10.5px;line-height:10.5px;color:#003038;white-space:pre;letter-spacing:-0.3px">A2</span>
<span style="position:absolute;left:9.4px;top:604.11px;font-size:10.5px;line-height:10.5px;color:#003038;white-space:pre;">2</span>
<span style="position:absolute;left:9.6px;top:745.93px;font-size:10px;line-height:10px;color:#202000;white-space:pre;">1</span>
<span style="position:absolute;left:968.4px;top:700.09px;font-size:11px;line-height:11px;color:#202000;white-space:pre;">T</span>
<div style="position:absolute;left:978px;top:93px;width:194px;height:722px;background:#f0f0f0"></div>
<div style="position:absolute;left:978px;top:93px;width:3px;height:722px;background:#fcfcfc"></div>
<div style="position:absolute;left:981px;top:122px;width:191px;height:1px;background:#d9d9d9"></div>
<div style="position:absolute;left:1159px;top:123px;width:13px;height:692px;background:#f2f2f2"></div>
<div style="position:absolute;left:1159px;top:140px;width:13px;height:614px;background:#cdcdcd"></div>
<svg style="position:absolute;left:1159px;top:123px" width="13" height="17" viewBox="0 0 13 17" ><path d="M2.8 11.4L6.6 7.4L10.4 11.4" fill="none" stroke="#4a4a4a" stroke-width="2"/></svg>
<span class="cj" style="left:1007px;top:101.84px">联机</span>
<span style="position:absolute;left:1031.4px;top:102.24px;font-size:12px;line-height:12px;color:#000;white-space:pre;">:</span>
<svg style="position:absolute;left:1037px;top:97px" width="24" height="24" viewBox="0 0 24 24" ><circle cx="11.7" cy="11.4" r="10" fill="#ff8000" stroke="#c86400" stroke-width="0.9"/></svg>
<div style="position:absolute;left:986px;top:132px;width:168px;height:103.5px;box-sizing:border-box;border:1px solid #dcdcdc;box-shadow:inset 1px 1px 0 #fff, 1px 1px 0 #fff"></div>
<div style="position:absolute;left:993px;top:130px;width:28px;height:5px;background:#f0f0f0"></div>
<span class="cj" style="left:995px;top:125.84px">水平</span>
<span class="cj" style="left:988.6px;top:146.44px">秒</span>
<span style="position:absolute;left:1003.3px;top:146.44px;font-size:12px;line-height:12px;color:#333;white-space:pre;">/</span>
<span class="cj" style="left:1008.6px;top:146.44px">格</span>
<div style="position:absolute;left:989px;top:164px;width:68px;height:20.5px;box-sizing:border-box;border:1px solid #adadad;background:#e1e1e1"></div>
<svg style="position:absolute;left:1043.6px;top:172px" width="10" height="6" viewBox="0 0 10 6" ><path d="M0.7 0.7L4.6 4.6L8.5 0.7" fill="none" stroke="#444" stroke-width="1.1"/></svg>
<span style="position:absolute;left:993.5px;top:169.48px;font-size:10.6px;line-height:10.6px;color:#000;white-space:pre;">5.000ms</span>
<span class="cj" style="left:988.6px;top:190.24px">格式</span>
<div style="position:absolute;left:989px;top:209px;width:68px;height:20.5px;box-sizing:border-box;border:1px solid #adadad;background:#e1e1e1"></div>
<svg style="position:absolute;left:1043.6px;top:217px" width="10" height="6" viewBox="0 0 10 6" ><path d="M0.7 0.7L4.6 4.6L8.5 0.7" fill="none" stroke="#444" stroke-width="1.1"/></svg>
<span style="position:absolute;left:993.5px;top:214.48px;font-size:10.6px;line-height:10.6px;color:#000;white-space:pre;">Y - T</span>
<svg style="position:absolute;left:1063.2px;top:155.8px" width="84" height="84" viewBox="0 0 84 84" ><defs><linearGradient id="kr1105197" x1="0" y1="0" x2="1" y2="1"><stop offset="0" stop-color="#d4d4d4"/><stop offset="0.5" stop-color="#b0b0b0"/><stop offset="1" stop-color="#7c7c7c"/></linearGradient>
<clipPath id="kc1105197"><rect x="0" y="0" width="84" height="71.0"/></clipPath></defs>
<g clip-path="url(#kc1105197)">
<circle cx="42" cy="42" r="35" fill="url(#kr1105197)"/>
<path d="M16.4 67.6A36.2 36.2 0 1 1 67.6 67.6" fill="none" stroke="#fff" stroke-width="2.2"/>
<path d="M15.4 68.6A37.6 37.6 0 1 1 68.6 68.6" fill="none" stroke="#1a1a1a" stroke-width="1.25"/>
<circle cx="42" cy="42" r="28.2" fill="#0000d4" stroke="#0000a0" stroke-width="1.5"/>
<path d="M37 19.4L40.6 34.8" stroke="#e4dca0" stroke-width="1.8"/>
<path d="M18 66L11.4 72.6M66 66L72.6 72.6" stroke="#111" stroke-width="1.3"/>
</g></svg>
<div style="position:absolute;left:986px;top:248px;width:168px;height:140.5px;box-sizing:border-box;border:1px solid #dcdcdc;box-shadow:inset 1px 1px 0 #fff, 1px 1px 0 #fff"></div>
<div style="position:absolute;left:993px;top:246px;width:28px;height:5px;background:#f0f0f0"></div>
<span class="cj" style="left:995px;top:242.64px">垂直</span>
<div style="position:absolute;left:989px;top:264px;width:68px;height:20.5px;box-sizing:border-box;border:1px solid #adadad;background:#e1e1e1"></div>
<svg style="position:absolute;left:1043.6px;top:272px" width="10" height="6" viewBox="0 0 10 6" ><path d="M0.7 0.7L4.6 4.6L8.5 0.7" fill="none" stroke="#444" stroke-width="1.1"/></svg>
<span style="position:absolute;left:993.5px;top:269.48px;font-size:10.6px;line-height:10.6px;color:#000;white-space:pre;"><span style="letter-spacing:-0.9px">CH1</span></span>
<div style="position:absolute;left:1062px;top:266px;width:13px;height:13px;box-sizing:border-box;border:1px solid #333;background:#fff"></div>
<svg style="position:absolute;left:1062px;top:266px" width="13" height="13" viewBox="0 0 13 13" ><path d="M2.8 6.4L5.4 9.2L10.4 3.4" fill="none" stroke="#333" stroke-width="1.3"/></svg>
<span class="cj" style="left:1078px;top:267.04px">开</span>
<span style="position:absolute;left:1090.4px;top:267.04px;font-size:12px;line-height:12px;color:#222;white-space:pre;">/</span>
<span class="cj" style="left:1093.6px;top:267.04px">关</span>
<div style="position:absolute;left:989px;top:290px;width:68px;height:19.5px;box-sizing:border-box;border:1px solid #7a7a7a;border-right-color:#c8c8c8;border-bottom-color:#c8c8c8;background:#fff;box-shadow:inset 1px 1px 0 #e3e3e3"></div>
<div style="position:absolute;left:1040px;top:291px;width:16px;height:17.5px;box-sizing:border-box;background:#f0f0f0;border:1px solid #d0d0d0"></div>
<div style="position:absolute;left:1040px;top:299.25px;width:16px;height:1px;background:#d0d0d0"></div>
<svg style="position:absolute;left:1040px;top:291px" width="16" height="17.5" viewBox="0 0 16 17.5" ><path d="M4.8 6.35L8.0 2.75L11.2 6.35Z M4.8 11.35L8.0 14.95L11.2 11.35Z" fill="#000"/></svg>
<span style="position:absolute;left:993.5px;top:294.98px;font-size:10.6px;line-height:10.6px;color:#000;white-space:pre;">100<span style="letter-spacing:-0.7px">kV</span></span>
<div style="position:absolute;left:989px;top:315.5px;width:68px;height:20px;box-sizing:border-box;border:1px solid #adadad;background:#e1e1e1"></div>
<svg style="position:absolute;left:1043.6px;top:323.5px" width="10" height="6" viewBox="0 0 10 6" ><path d="M0.7 0.7L4.6 4.6L8.5 0.7" fill="none" stroke="#444" stroke-width="1.1"/></svg>
<span class="cj" style="left:992.6px;top:319.94px">直流</span>
<div style="position:absolute;left:989px;top:341.5px;width:68px;height:20px;box-sizing:border-box;border:1px solid #adadad;background:#e1e1e1"></div>
<svg style="position:absolute;left:1043.6px;top:349.5px" width="10" height="6" viewBox="0 0 10 6" ><path d="M0.7 0.7L4.6 4.6L8.5 0.7" fill="none" stroke="#444" stroke-width="1.1"/></svg>
<span style="position:absolute;left:993.5px;top:346.73px;font-size:10.6px;line-height:10.6px;color:#000;white-space:pre;">x10000</span>
<svg style="position:absolute;left:1064px;top:286px" width="84" height="84" viewBox="0 0 84 84" ><defs><linearGradient id="kr1106328" x1="0" y1="0" x2="1" y2="1"><stop offset="0" stop-color="#d4d4d4"/><stop offset="0.5" stop-color="#b0b0b0"/><stop offset="1" stop-color="#7c7c7c"/></linearGradient>
<clipPath id="kc1106328"><rect x="0" y="0" width="84" height="75.80000000000001"/></clipPath></defs>
<g clip-path="url(#kc1106328)">
<circle cx="42" cy="42" r="35" fill="url(#kr1106328)"/>
<path d="M16.4 67.6A36.2 36.2 0 1 1 67.6 67.6" fill="none" stroke="#fff" stroke-width="2.2"/>
<path d="M15.4 68.6A37.6 37.6 0 1 1 68.6 68.6" fill="none" stroke="#1a1a1a" stroke-width="1.25"/>
<circle cx="42" cy="42" r="28.2" fill="#ffff00" stroke="#8c8c00" stroke-width="1.5"/>
<path d="M25.2 58.6L36.6 47.4" stroke="#484878" stroke-width="2.2"/>
<path d="M18 66L11.4 72.6M66 66L72.6 72.6" stroke="#111" stroke-width="1.3"/>
</g></svg>
<div style="position:absolute;left:986px;top:399px;width:168px;height:223.5px;box-sizing:border-box;border:1px solid #dcdcdc;box-shadow:inset 1px 1px 0 #fff, 1px 1px 0 #fff"></div>
<div style="position:absolute;left:992.6px;top:397px;width:28px;height:5px;background:#f0f0f0"></div>
<span class="cj" style="left:994.6px;top:393.34px">触发</span>
<span class="cj" style="left:988.6px;top:418.54px">触发模式</span>
<div style="position:absolute;left:1076px;top:414.4px;width:68px;height:20.2px;box-sizing:border-box;border:1px solid #adadad;background:#e1e1e1"></div>
<svg style="position:absolute;left:1130.6px;top:422.4px" width="10" height="6" viewBox="0 0 10 6" ><path d="M0.7 0.7L4.6 4.6L8.5 0.7" fill="none" stroke="#444" stroke-width="1.1"/></svg>
<span class="cj" style="left:1079.6px;top:418.94px">边沿</span>
<span class="cj" style="left:988.6px;top:446.44px">触发方式</span>
<div style="position:absolute;left:1076px;top:442.3px;width:68px;height:20.2px;box-sizing:border-box;border:1px solid #adadad;background:#e1e1e1"></div>
<svg style="position:absolute;left:1130.6px;top:450.3px" width="10" height="6" viewBox="0 0 10 6" ><path d="M0.7 0.7L4.6 4.6L8.5 0.7" fill="none" stroke="#444" stroke-width="1.1"/></svg>
<span class="cj" style="left:1079.6px;top:446.84px">自动</span>
<span class="cj" style="left:988.6px;top:473.44px">触发信源</span>
<div style="position:absolute;left:1076px;top:469.3px;width:68px;height:20.2px;box-sizing:border-box;border:1px solid #adadad;background:#e1e1e1"></div>
<svg style="position:absolute;left:1130.6px;top:477.3px" width="10" height="6" viewBox="0 0 10 6" ><path d="M0.7 0.7L4.6 4.6L8.5 0.7" fill="none" stroke="#444" stroke-width="1.1"/></svg>
<span style="position:absolute;left:1080.5px;top:474.63px;font-size:10.6px;line-height:10.6px;color:#000;white-space:pre;"><span style="letter-spacing:-0.9px">CH1</span></span>
<span class="cj" style="left:988.6px;top:502.44px">边沿类型</span>
<div style="position:absolute;left:1076px;top:498.3px;width:68px;height:20.2px;box-sizing:border-box;border:1px solid #adadad;background:#e1e1e1"></div>
<svg style="position:absolute;left:1130.6px;top:506.3px" width="10" height="6" viewBox="0 0 10 6" ><path d="M0.7 0.7L4.6 4.6L8.5 0.7" fill="none" stroke="#444" stroke-width="1.1"/></svg>
<span style="position:absolute;left:1080.5px;top:503.63px;font-size:10.6px;line-height:10.6px;color:#000;white-space:pre;">+</span>
<div style="position:absolute;left:990px;top:529.3px;width:156px;height:34.4px;box-sizing:border-box;border:2px solid #0078d7;background:#e1e1e1"></div>
<span class="cj" style="left:1031.8px;top:540.24px">选择检测项目</span>
<div style="position:absolute;left:990px;top:577.3px;width:159px;height:38.6px;box-sizing:border-box;border:1px solid #adadad;background:#e1e1e1"></div>
<span class="cj" style="left:1032px;top:590.24px">清除参考波形</span>
<div style="position:absolute;left:981.5px;top:659.7px;width:167.5px;height:108.59999999999991px;box-sizing:border-box;border:1px solid #dcdcdc;box-shadow:inset 1px 1px 0 #fff, 1px 1px 0 #fff"></div>
<div style="position:absolute;left:987.6px;top:657.7px;width:52px;height:5px;background:#f0f0f0"></div>
<span class="cj" style="left:989.6px;top:653.84px">波形移动</span>
<span class="cj" style="left:982.8px;top:671.84px;color:#a8a8a8">数据长度</span>
<div style="position:absolute;left:1070px;top:666.5px;width:67px;height:16.5px;box-sizing:border-box;border:1px solid #a0a0a0;border-right-color:#fff;border-bottom-color:#fff;background:#f0f0f0"></div>
<span style="position:absolute;left:1070px;width:67px;text-align:center;top:669.4px;font-size:10.6px;line-height:10.6px;color:#8c8c8c">4096</span>
<span class="cj" style="left:982.8px;top:703.04px;color:#a8a8a8">步进</span>
<div style="position:absolute;left:1068.5px;top:700.5px;width:68px;height:19px;box-sizing:border-box;border:1px solid #b4b4b4;border-right-color:#c4c4c4;border-bottom-color:#c4c4c4;background:#f0f0f0;box-shadow:inset 1px 1px 0 #fafafa, inset -1px -1px 0 #fafafa"></div>
<div style="position:absolute;left:1119.5px;top:701.5px;width:16px;height:17px;box-sizing:border-box;background:#f0f0f0;border:1px solid #d0d0d0"></div>
<div style="position:absolute;left:1119.5px;top:709.5px;width:16px;height:1px;background:#d0d0d0"></div>
<svg style="position:absolute;left:1119.5px;top:701.5px" width="16" height="17" viewBox="0 0 16 17" ><path d="M4.8 6.1L8.0 2.5L11.2 6.1Z M4.8 11.1L8.0 14.7L11.2 11.1Z" fill="#606060"/></svg>
<span style="position:absolute;left:1068.5px;width:51px;text-align:center;top:705.23px;font-size:10.6px;line-height:10.6px;color:#6d6d6d">1000</span>
<div style="position:absolute;left:994.6px;top:724.4px;width:27px;height:17px;background:#cccccc"></div>
<span style="position:absolute;left:1003px;top:727.63px;font-size:10.6px;line-height:10.6px;color:#8a8a8a;white-space:pre;">|&lt;</span>
<div style="position:absolute;left:1025.6px;top:723.2px;width:81.6px;height:19.3px;box-sizing:border-box;border:1px solid #b4b4b4;border-right-color:#c4c4c4;border-bottom-color:#c4c4c4;background:#f0f0f0;box-shadow:inset 1px 1px 0 #fafafa, inset -1px -1px 0 #fafafa"></div>
<div style="position:absolute;left:1090.1999999999998px;top:724.2px;width:16px;height:17.3px;box-sizing:border-box;background:#f0f0f0;border:1px solid #d0d0d0"></div>
<div style="position:absolute;left:1090.1999999999998px;top:732.35px;width:16px;height:1px;background:#d0d0d0"></div>
<svg style="position:absolute;left:1090.1999999999998px;top:724.2px" width="16" height="17.3" viewBox="0 0 16 17.3" ><path d="M4.8 6.25L8.0 2.6500000000000004L11.2 6.25Z M4.8 11.25L8.0 14.850000000000001L11.2 11.25Z" fill="#606060"/></svg>
<span style="position:absolute;left:1025.6px;width:64.6px;text-align:center;top:728.08px;font-size:10.6px;line-height:10.6px;color:#6d6d6d">2047</span>
<div style="position:absolute;left:1111.4px;top:724.4px;width:27px;height:17px;background:#cccccc"></div>
<span style="position:absolute;left:1120px;top:727.63px;font-size:10.6px;line-height:10.6px;color:#8a8a8a;white-space:pre;">&gt;|</span>
<div style="position:absolute;left:983px;top:782.2px;width:168px;height:32.799999999999955px;box-sizing:border-box;border:1px solid #dcdcdc;border-bottom:none;box-shadow:inset 1px 1px 0 #fff, 1px 1px 0 #fff"></div>
<div style="position:absolute;left:989.6px;top:780.2px;width:52px;height:5px;background:#f0f0f0"></div>
<span class="cj" style="left:991.6px;top:776.84px">数据记录</span>
<span class="cj" style="left:992.6px;top:802.84px">路径</span>
<span style="position:absolute;left:1018.4px;top:802.84px;font-size:12px;line-height:12px;color:#000;white-space:pre;">:</span>
<div style="position:absolute;left:1032px;top:801.3px;width:80px;height:14px;box-sizing:border-box;border:1px solid #7a7a7a;border-bottom:none;background:#fff"></div>
<span style="position:absolute;left:1036.6px;top:803.63px;font-size:10.6px;line-height:10.6px;color:#000;white-space:pre;">C:\data.drc</span>
<div style="position:absolute;left:1116.4px;top:802.5px;width:20.4px;height:13px;box-sizing:border-box;border:1px solid #adadad;border-bottom:none;background:#e1e1e1"></div>
<span style="position:absolute;left:1122px;top:803.03px;font-size:10.6px;line-height:10.6px;color:#000;white-space:pre;">...</span>
<div style="position:absolute;left:0px;top:0px;width:1174px;height:30px;background:#fff"></div>
<div style="position:absolute;left:0px;top:30px;width:1174px;height:21px;background:#fff"></div>
<div style="position:absolute;left:0px;top:0px;width:1174px;height:1px;background:#2d6ca6"></div>
<svg style="position:absolute;left:9px;top:7px" width="15" height="16" viewBox="0 0 15 16" >
<defs><linearGradient id="mg" x1="0" y1="0" x2="0" y2="1"><stop offset="0" stop-color="#6a6f68"/><stop offset="0.5" stop-color="#4a4d49"/><stop offset="1" stop-color="#2c2c2c"/></linearGradient></defs>
<rect x="0.3" y="0.3" width="14.4" height="13" rx="0.8" fill="#c9c9c9" stroke="#9a9a9a" stroke-width="0.6"/>
<rect x="1.3" y="1.4" width="12.4" height="9.6" fill="url(#mg)"/>
<path d="M2.2 5.6H5.2L6.2 4.4L7 2.4L7.5 8.6L8.2 5.6H12.8" fill="none" stroke="#8fc24a" stroke-width="0.9"/>
<path d="M7.2 2V10.6" stroke="#a8cc80" stroke-width="0.5" opacity="0.7"/>
<rect x="0.3" y="12.6" width="14.4" height="1.3" fill="#1c1c1c"/>
<rect x="5.4" y="13.9" width="4.2" height="1.2" fill="#bdbdbd"/>
<rect x="3.2" y="15" width="8.6" height="0.9" rx="0.4" fill="#555"/>
</svg>
<span style="position:absolute;left:29.4px;top:9.80px;font-size:12.4px;line-height:12.4px;color:#000;white-space:pre;letter-spacing:0.33px">DSO-6000 - [Scope1]</span>
<svg style="position:absolute;left:1040px;top:1px" width="132" height="29" viewBox="0 0 132 29" >
<path d="M13 14.5H23" stroke="#000" stroke-width="1"/>
<rect x="58.5" y="9.5" width="9" height="9" fill="none" stroke="#000" stroke-width="1"/>
<path d="M104 9.5L114 19.5M114 9.5L104 19.5" stroke="#000" stroke-width="1.1"/>
</svg>
<svg style="position:absolute;left:8px;top:32.5px" width="15" height="16" viewBox="0 0 15 16" >
<defs><linearGradient id="mg" x1="0" y1="0" x2="0" y2="1"><stop offset="0" stop-color="#6a6f68"/><stop offset="0.5" stop-color="#4a4d49"/><stop offset="1" stop-color="#2c2c2c"/></linearGradient></defs>
<rect x="0.3" y="0.3" width="14.4" height="13" rx="0.8" fill="#c9c9c9" stroke="#9a9a9a" stroke-width="0.6"/>
<rect x="1.3" y="1.4" width="12.4" height="9.6" fill="url(#mg)"/>
<path d="M2.2 5.6H5.2L6.2 4.4L7 2.4L7.5 8.6L8.2 5.6H12.8" fill="none" stroke="#8fc24a" stroke-width="0.9"/>
<path d="M7.2 2V10.6" stroke="#a8cc80" stroke-width="0.5" opacity="0.7"/>
<rect x="0.3" y="12.6" width="14.4" height="1.3" fill="#1c1c1c"/>
<rect x="5.4" y="13.9" width="4.2" height="1.2" fill="#bdbdbd"/>
<rect x="3.2" y="15" width="8.6" height="0.9" rx="0.4" fill="#555"/>
</svg>
<span class="cj" style="left:30px;top:34.74px">文件</span>
<span style="position:absolute;left:54.6px;top:35.57px;font-size:11.5px;line-height:11.5px;color:#000;white-space:pre;letter-spacing:-0.35px">(<u>F</u>)</span>
<span class="cj" style="left:82px;top:34.74px">视图</span>
<span style="position:absolute;left:106.6px;top:35.57px;font-size:11.5px;line-height:11.5px;color:#000;white-space:pre;letter-spacing:-0.35px">(<u>V</u>)</span>
<span class="cj" style="left:136px;top:34.74px">设置</span>
<span style="position:absolute;left:160.4px;top:35.57px;font-size:11.5px;line-height:11.5px;color:#000;white-space:pre;letter-spacing:-0.35px">(<u>S</u>)</span>
<span class="cj" style="left:188.5px;top:34.74px">显示</span>
<span style="position:absolute;left:213.4px;top:35.57px;font-size:11.5px;line-height:11.5px;color:#000;white-space:pre;letter-spacing:-0.35px">(<u>D</u>)</span>
<span class="cj" style="left:243.5px;top:34.74px">光标</span>
<span style="position:absolute;left:268px;top:35.57px;font-size:11.5px;line-height:11.5px;color:#000;white-space:pre;letter-spacing:-0.35px">(<u>C</u>)</span>
<span class="cj" style="left:297.5px;top:34.74px">测量</span>
<span style="position:absolute;left:322.2px;top:35.57px;font-size:11.5px;line-height:11.5px;color:#000;white-space:pre;letter-spacing:-0.35px">(<u>M</u>)</span>
<span class="cj" style="left:355.5px;top:34.74px">获取</span>
<span style="position:absolute;left:380.4px;top:35.57px;font-size:11.5px;line-height:11.5px;color:#000;white-space:pre;letter-spacing:-0.35px">(<u>A</u>)</span>
<span class="cj" style="left:409.5px;top:34.74px">辅助</span>
<span style="position:absolute;left:434.2px;top:35.57px;font-size:11.5px;line-height:11.5px;color:#000;white-space:pre;letter-spacing:-0.35px">(<u>U</u>)</span>
<span class="cj" style="left:464.5px;top:34.74px">窗口</span>
<span style="position:absolute;left:489.6px;top:35.57px;font-size:11.5px;line-height:11.5px;color:#000;white-space:pre;letter-spacing:-0.35px">(<u>W</u>)</span>
<span class="cj" style="left:522.5px;top:34.74px">帮助</span>
<span style="position:absolute;left:547.4px;top:35.57px;font-size:11.5px;line-height:11.5px;color:#000;white-space:pre;letter-spacing:-0.35px">(<u>H</u>)</span>
<div style="position:absolute;left:1115px;top:32px;width:17px;height:17px;box-sizing:border-box;border:1px solid #ececec;background:#fdfdfd"></div>
<div style="position:absolute;left:1134px;top:32px;width:17px;height:17px;box-sizing:border-box;border:1px solid #ececec;background:#fdfdfd"></div>
<div style="position:absolute;left:1153px;top:32px;width:17px;height:17px;box-sizing:border-box;border:1px solid #ececec;background:#fdfdfd"></div>
<svg style="position:absolute;left:1115px;top:32px" width="56" height="18" viewBox="0 0 56 18" >
<rect x="5" y="10.6" width="6" height="2.2" fill="#6a6a6a"/>
<path d="M26.2 6.2H31.8V9.6M26.2 6.2V8" fill="none" stroke="#6a6a6a" stroke-width="1.3"/>
<rect x="24.2" y="8.6" width="5.6" height="4.4" fill="none" stroke="#6a6a6a" stroke-width="1.3"/>
<path d="M44.6 6.4L50.6 12.8M50.6 6.4L44.6 12.8" stroke="#6a6a6a" stroke-width="2"/>
</svg>
<div style="position:absolute;left:0px;top:51px;width:1174px;height:1px;background:#a0a0a0"></div>
<div style="position:absolute;left:0px;top:813px;width:981px;height:2px;background:#fbfbfb"></div>
<div style="position:absolute;left:0px;top:815px;width:1174px;height:19px;background:#f0f0f0"></div>
<div style="position:absolute;left:0px;top:815px;width:1174px;height:1px;background:#f8f8f8"></div>
<span class="cj" style="left:2.5px;top:819.74px">已连接</span>
<div style="position:absolute;left:1044px;top:817px;width:1px;height:16px;background:#d7d7d7"></div>
<span style="position:absolute;left:1050px;top:820.07px;font-size:12.2px;line-height:12.2px;color:#000;white-space:pre;">25-03-2016  11:27</span>
<svg style="position:absolute;left:1161.4px;top:823px" width="12" height="12" viewBox="0 0 12 12" ><g fill="#bfbfbf"><rect x="8" y="0" width="2" height="2"/><rect x="4" y="4" width="2" height="2"/><rect x="8" y="4" width="2" height="2"/><rect x="0" y="8" width="2" height="2"/><rect x="4" y="8" width="2" height="2"/><rect x="8" y="8" width="2" height="2"/></g></svg>
<div style="position:absolute;left:0px;top:834px;width:1174px;height:1px;background:#8fbbe4"></div>
<div style="position:absolute;left:0px;top:835px;width:1174px;height:1px;background:#10283f"></div>
<div style="position:absolute;left:0px;top:52px;width:1.5px;height:41px;background:#dfe6ee"></div>
<div style="position:absolute;left:0px;top:93px;width:1.6px;height:741px;background:#aab8cc"></div>
<div style="position:absolute;left:1172px;top:0px;width:1px;height:835px;background:#6aa3d8"></div>
<div style="position:absolute;left:1173px;top:0px;width:1px;height:836px;background:#1d4f86"></div>
</body></html>
